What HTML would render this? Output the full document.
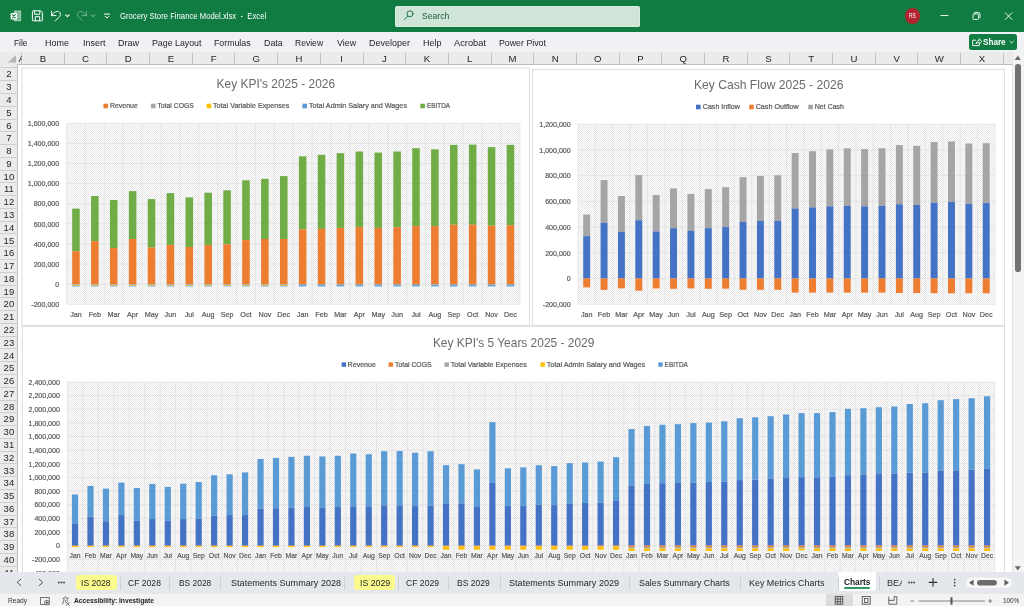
<!DOCTYPE html>
<html lang="en"><head><meta charset="utf-8"><title>Grocery Store Finance Model.xlsx - Excel</title>
<style>
html,body{margin:0;padding:0;}
body{width:1024px;height:606px;overflow:hidden;position:relative;background:#fff;font-family:"Liberation Sans",sans-serif;}
#app{position:absolute;left:0;top:0;width:1024px;height:606px;overflow:hidden;background:#fff;}
#ui{position:absolute;left:0;top:0;width:1024px;height:606px;will-change:transform;}
.t{position:absolute;white-space:pre;transform-origin:0 50%;line-height:1.16;}
#titlebar{position:absolute;left:0;top:0;width:1024px;height:32px;background:#107c41;}
#search{position:absolute;left:395px;top:5.5px;width:244.8px;height:21px;background:#cfe5d8;border-radius:2.5px;box-shadow:inset 0 0 0 0.6px #e3f0e8;}
#avatar{position:absolute;left:904.5px;top:8.1px;width:15.8px;height:15.8px;border-radius:50%;background:#b0232f;}
#menubar{position:absolute;left:0;top:32px;width:1024px;height:20.2px;background:#eff1f4;}
#share{position:absolute;left:969px;top:34.2px;width:47.6px;height:15.7px;background:#107c41;border-radius:2.5px;}
#colhdr{position:absolute;left:0;top:52.2px;width:1011.5px;height:11.7px;background:#ebebeb;border-bottom:1px solid #bdbdbd;}
.cb{position:absolute;top:53px;width:1px;height:11px;background:#c4c4c4;}
#rowhdr{position:absolute;left:0;top:64.4px;width:17px;height:510px;background:#ebebeb;border-right:1px solid #bdbdbd;}
.rb{position:absolute;left:0;width:17px;height:1px;background:#cfcfcf;}
#vscroll{position:absolute;left:1011.5px;top:52.2px;width:12.5px;height:520px;background:#f3f3f3;border-left:1px solid #e4e4e4;box-sizing:border-box;}
#vthumb{position:absolute;left:1015.3px;top:63.8px;width:5.6px;height:207.9px;border-radius:2.8px;background:#727272;}
#tabbar{position:absolute;left:0;top:572.3px;width:1024px;height:21.5px;background:#e4e7ec;}
.ytab{position:absolute;top:575.2px;height:15.3px;border-radius:3px;background:#fcfb8e;}
#acttab{position:absolute;left:838.3px;top:572px;width:38.1px;height:18.9px;background:#fff;border-radius:0 0 4px 4px;}
#actline{position:absolute;left:843.5px;top:587.2px;width:26.3px;height:1.5px;background:#2f9460;border-radius:1px;}
.ts{position:absolute;top:576.5px;width:1px;height:13px;background:#cdcfd3;}
#statusbar{position:absolute;left:0;top:593.8px;width:1024px;height:12.2px;background:#f3f3f3;}
#viewsel{position:absolute;left:826px;top:593.8px;width:26.9px;height:12.2px;background:#dcdcdc;}
svg{position:absolute;left:0;top:0;will-change:transform;}
svg text{font-family:"Liberation Sans",sans-serif;}
</style></head>
<body><div id="app">
<svg id="charts" width="1024" height="572" viewBox="0 0 1024 572">
<defs>
<pattern id="hatch" width="2" height="2" patternUnits="userSpaceOnUse">
<rect width="2" height="2" fill="#fdfdfd"/><path d="M-1 -1L3 3M-1 1L1 3M1 -1L3 1" stroke="#dcdcdc" stroke-width="0.62" fill="none"/>
</pattern>
</defs>
<rect x="22" y="68.1" width="507.4" height="257.3" fill="#fff" stroke="#dddddd" stroke-width="1"/>
<rect x="532.5" y="69.4" width="471.9" height="256" fill="#fff" stroke="#dddddd" stroke-width="1"/>
<rect x="22.3" y="326.3" width="982.2" height="313.7" fill="#fff" stroke="#dddddd" stroke-width="1"/>
<rect x="66.5" y="123.3" width="453.4" height="180.9" fill="url(#hatch)"/>
<path d="M66.5 123.3V304.2M85.39 123.3V304.2M104.28 123.3V304.2M123.17 123.3V304.2M142.07 123.3V304.2M160.96 123.3V304.2M179.85 123.3V304.2M198.74 123.3V304.2M217.63 123.3V304.2M236.53 123.3V304.2M255.42 123.3V304.2M274.31 123.3V304.2M293.2 123.3V304.2M312.09 123.3V304.2M330.98 123.3V304.2M349.88 123.3V304.2M368.77 123.3V304.2M387.66 123.3V304.2M406.55 123.3V304.2M425.44 123.3V304.2M444.33 123.3V304.2M463.22 123.3V304.2M482.12 123.3V304.2M501.01 123.3V304.2M519.9 123.3V304.2" stroke="#dfdfdf" stroke-width="0.7" fill="none"/>
<path d="M66.5 123.3H519.9M66.5 143.4H519.9M66.5 163.5H519.9M66.5 183.6H519.9M66.5 203.7H519.9M66.5 223.8H519.9M66.5 243.9H519.9M66.5 264H519.9M66.5 284.1H519.9M66.5 304.2H519.9" stroke="#dfdfdf" stroke-width="0.75" fill="none"/>
<rect x="72.17" y="208.65" width="7.56" height="42.55" fill="#70AD47"/>
<rect x="72.17" y="251.2" width="7.56" height="32.9" fill="#ED7D31"/>
<rect x="72.17" y="284.1" width="7.56" height="0.8" fill="#A5A5A5"/>
<rect x="72.17" y="284.9" width="7.56" height="0.8" fill="#FFC000"/>
<rect x="72.17" y="285.7" width="7.56" height="0.7" fill="#5B9BD5"/>
<text x="75.95" y="317.3" font-size="8" fill="#595959" text-anchor="middle" textLength="11.61" lengthAdjust="spacingAndGlyphs" stroke="#595959" stroke-width="0.22">Jan</text>
<rect x="91.06" y="196.1" width="7.56" height="45.1" fill="#70AD47"/>
<rect x="91.06" y="241.2" width="7.56" height="42.9" fill="#ED7D31"/>
<rect x="91.06" y="284.1" width="7.56" height="0.8" fill="#A5A5A5"/>
<rect x="91.06" y="284.9" width="7.56" height="0.8" fill="#FFC000"/>
<rect x="91.06" y="285.7" width="7.56" height="0.7" fill="#5B9BD5"/>
<text x="94.84" y="317.3" font-size="8" fill="#595959" text-anchor="middle" textLength="12.41" lengthAdjust="spacingAndGlyphs" stroke="#595959" stroke-width="0.22">Feb</text>
<rect x="109.95" y="200" width="7.56" height="48.1" fill="#70AD47"/>
<rect x="109.95" y="248.1" width="7.56" height="36" fill="#ED7D31"/>
<rect x="109.95" y="284.1" width="7.56" height="0.8" fill="#A5A5A5"/>
<rect x="109.95" y="284.9" width="7.56" height="0.8" fill="#FFC000"/>
<rect x="109.95" y="285.7" width="7.56" height="0.7" fill="#5B9BD5"/>
<text x="113.73" y="317.3" font-size="8" fill="#595959" text-anchor="middle" textLength="12.4" lengthAdjust="spacingAndGlyphs" stroke="#595959" stroke-width="0.22">Mar</text>
<rect x="128.84" y="191.1" width="7.56" height="47.9" fill="#70AD47"/>
<rect x="128.84" y="239" width="7.56" height="45.1" fill="#ED7D31"/>
<rect x="128.84" y="284.1" width="7.56" height="0.8" fill="#A5A5A5"/>
<rect x="128.84" y="284.9" width="7.56" height="0.8" fill="#FFC000"/>
<rect x="128.84" y="285.7" width="7.56" height="0.7" fill="#5B9BD5"/>
<text x="132.62" y="317.3" font-size="8" fill="#595959" text-anchor="middle" textLength="11.2" lengthAdjust="spacingAndGlyphs" stroke="#595959" stroke-width="0.22">Apr</text>
<rect x="147.73" y="199.1" width="7.56" height="48.5" fill="#70AD47"/>
<rect x="147.73" y="247.6" width="7.56" height="36.5" fill="#ED7D31"/>
<rect x="147.73" y="284.1" width="7.56" height="0.8" fill="#A5A5A5"/>
<rect x="147.73" y="284.9" width="7.56" height="0.8" fill="#FFC000"/>
<rect x="147.73" y="285.7" width="7.56" height="0.7" fill="#5B9BD5"/>
<text x="151.51" y="317.3" font-size="8" fill="#595959" text-anchor="middle" textLength="13.6" lengthAdjust="spacingAndGlyphs" stroke="#595959" stroke-width="0.22">May</text>
<rect x="166.63" y="193.1" width="7.56" height="51.8" fill="#70AD47"/>
<rect x="166.63" y="244.9" width="7.56" height="39.2" fill="#ED7D31"/>
<rect x="166.63" y="284.1" width="7.56" height="0.8" fill="#A5A5A5"/>
<rect x="166.63" y="284.9" width="7.56" height="0.8" fill="#FFC000"/>
<rect x="166.63" y="285.7" width="7.56" height="0.7" fill="#5B9BD5"/>
<text x="170.4" y="317.3" font-size="8" fill="#595959" text-anchor="middle" textLength="11.61" lengthAdjust="spacingAndGlyphs" stroke="#595959" stroke-width="0.22">Jun</text>
<rect x="185.52" y="197.4" width="7.56" height="49.6" fill="#70AD47"/>
<rect x="185.52" y="247" width="7.56" height="37.1" fill="#ED7D31"/>
<rect x="185.52" y="284.1" width="7.56" height="0.8" fill="#A5A5A5"/>
<rect x="185.52" y="284.9" width="7.56" height="0.8" fill="#FFC000"/>
<rect x="185.52" y="285.7" width="7.56" height="0.7" fill="#5B9BD5"/>
<text x="189.3" y="317.3" font-size="8" fill="#595959" text-anchor="middle" textLength="9.2" lengthAdjust="spacingAndGlyphs" stroke="#595959" stroke-width="0.22">Jul</text>
<rect x="204.41" y="192.7" width="7.56" height="52.2" fill="#70AD47"/>
<rect x="204.41" y="244.9" width="7.56" height="39.2" fill="#ED7D31"/>
<rect x="204.41" y="284.1" width="7.56" height="0.8" fill="#A5A5A5"/>
<rect x="204.41" y="284.9" width="7.56" height="0.8" fill="#FFC000"/>
<rect x="204.41" y="285.7" width="7.56" height="0.7" fill="#5B9BD5"/>
<text x="208.19" y="317.3" font-size="8" fill="#595959" text-anchor="middle" textLength="12.81" lengthAdjust="spacingAndGlyphs" stroke="#595959" stroke-width="0.22">Aug</text>
<rect x="223.3" y="190.3" width="7.56" height="54" fill="#70AD47"/>
<rect x="223.3" y="244.3" width="7.56" height="39.8" fill="#ED7D31"/>
<rect x="223.3" y="284.1" width="7.56" height="0.8" fill="#A5A5A5"/>
<rect x="223.3" y="284.9" width="7.56" height="0.8" fill="#FFC000"/>
<rect x="223.3" y="285.7" width="7.56" height="0.7" fill="#5B9BD5"/>
<text x="227.08" y="317.3" font-size="8" fill="#595959" text-anchor="middle" textLength="12.81" lengthAdjust="spacingAndGlyphs" stroke="#595959" stroke-width="0.22">Sep</text>
<rect x="242.19" y="180.3" width="7.56" height="59.8" fill="#70AD47"/>
<rect x="242.19" y="240.1" width="7.56" height="44" fill="#ED7D31"/>
<rect x="242.19" y="284.1" width="7.56" height="0.8" fill="#A5A5A5"/>
<rect x="242.19" y="284.9" width="7.56" height="0.8" fill="#FFC000"/>
<rect x="242.19" y="285.7" width="7.56" height="0.7" fill="#5B9BD5"/>
<text x="245.97" y="317.3" font-size="8" fill="#595959" text-anchor="middle" textLength="11.2" lengthAdjust="spacingAndGlyphs" stroke="#595959" stroke-width="0.22">Oct</text>
<rect x="261.08" y="178.9" width="7.56" height="60.1" fill="#70AD47"/>
<rect x="261.08" y="239" width="7.56" height="45.1" fill="#ED7D31"/>
<rect x="261.08" y="284.1" width="7.56" height="0.8" fill="#A5A5A5"/>
<rect x="261.08" y="284.9" width="7.56" height="0.8" fill="#FFC000"/>
<rect x="261.08" y="285.7" width="7.56" height="0.7" fill="#5B9BD5"/>
<text x="264.86" y="317.3" font-size="8" fill="#595959" text-anchor="middle" textLength="12.8" lengthAdjust="spacingAndGlyphs" stroke="#595959" stroke-width="0.22">Nov</text>
<rect x="279.98" y="176.1" width="7.56" height="62.9" fill="#70AD47"/>
<rect x="279.98" y="239" width="7.56" height="45.1" fill="#ED7D31"/>
<rect x="279.98" y="284.1" width="7.56" height="0.8" fill="#A5A5A5"/>
<rect x="279.98" y="284.9" width="7.56" height="0.8" fill="#FFC000"/>
<rect x="279.98" y="285.7" width="7.56" height="0.7" fill="#5B9BD5"/>
<text x="283.75" y="317.3" font-size="8" fill="#595959" text-anchor="middle" textLength="12.8" lengthAdjust="spacingAndGlyphs" stroke="#595959" stroke-width="0.22">Dec</text>
<rect x="298.87" y="156.3" width="7.56" height="73.1" fill="#70AD47"/>
<rect x="298.87" y="229.4" width="7.56" height="54.7" fill="#ED7D31"/>
<rect x="298.87" y="284.1" width="7.56" height="1" fill="#A5A5A5"/>
<rect x="298.87" y="285.1" width="7.56" height="1.3" fill="#5B9BD5"/>
<text x="302.65" y="317.3" font-size="8" fill="#595959" text-anchor="middle" textLength="11.61" lengthAdjust="spacingAndGlyphs" stroke="#595959" stroke-width="0.22">Jan</text>
<rect x="317.76" y="154.8" width="7.56" height="74.1" fill="#70AD47"/>
<rect x="317.76" y="228.9" width="7.56" height="55.2" fill="#ED7D31"/>
<rect x="317.76" y="284.1" width="7.56" height="1" fill="#A5A5A5"/>
<rect x="317.76" y="285.1" width="7.56" height="1.3" fill="#5B9BD5"/>
<text x="321.54" y="317.3" font-size="8" fill="#595959" text-anchor="middle" textLength="12.41" lengthAdjust="spacingAndGlyphs" stroke="#595959" stroke-width="0.22">Feb</text>
<rect x="336.65" y="153.2" width="7.56" height="74.7" fill="#70AD47"/>
<rect x="336.65" y="227.9" width="7.56" height="56.2" fill="#ED7D31"/>
<rect x="336.65" y="284.1" width="7.56" height="1" fill="#A5A5A5"/>
<rect x="336.65" y="285.1" width="7.56" height="1.3" fill="#5B9BD5"/>
<text x="340.43" y="317.3" font-size="8" fill="#595959" text-anchor="middle" textLength="12.4" lengthAdjust="spacingAndGlyphs" stroke="#595959" stroke-width="0.22">Mar</text>
<rect x="355.54" y="151.5" width="7.56" height="75.6" fill="#70AD47"/>
<rect x="355.54" y="227.1" width="7.56" height="57" fill="#ED7D31"/>
<rect x="355.54" y="284.1" width="7.56" height="1" fill="#A5A5A5"/>
<rect x="355.54" y="285.1" width="7.56" height="1.3" fill="#5B9BD5"/>
<text x="359.32" y="317.3" font-size="8" fill="#595959" text-anchor="middle" textLength="11.2" lengthAdjust="spacingAndGlyphs" stroke="#595959" stroke-width="0.22">Apr</text>
<rect x="374.43" y="152.6" width="7.56" height="75.3" fill="#70AD47"/>
<rect x="374.43" y="227.9" width="7.56" height="56.2" fill="#ED7D31"/>
<rect x="374.43" y="284.1" width="7.56" height="1" fill="#A5A5A5"/>
<rect x="374.43" y="285.1" width="7.56" height="1.3" fill="#5B9BD5"/>
<text x="378.21" y="317.3" font-size="8" fill="#595959" text-anchor="middle" textLength="13.6" lengthAdjust="spacingAndGlyphs" stroke="#595959" stroke-width="0.22">May</text>
<rect x="393.33" y="151.5" width="7.56" height="75.7" fill="#70AD47"/>
<rect x="393.33" y="227.2" width="7.56" height="56.9" fill="#ED7D31"/>
<rect x="393.33" y="284.1" width="7.56" height="1" fill="#A5A5A5"/>
<rect x="393.33" y="285.1" width="7.56" height="1.3" fill="#5B9BD5"/>
<text x="397.1" y="317.3" font-size="8" fill="#595959" text-anchor="middle" textLength="11.61" lengthAdjust="spacingAndGlyphs" stroke="#595959" stroke-width="0.22">Jun</text>
<rect x="412.22" y="148.2" width="7.56" height="77.9" fill="#70AD47"/>
<rect x="412.22" y="226.1" width="7.56" height="58" fill="#ED7D31"/>
<rect x="412.22" y="284.1" width="7.56" height="1" fill="#A5A5A5"/>
<rect x="412.22" y="285.1" width="7.56" height="1.3" fill="#5B9BD5"/>
<text x="416" y="317.3" font-size="8" fill="#595959" text-anchor="middle" textLength="9.2" lengthAdjust="spacingAndGlyphs" stroke="#595959" stroke-width="0.22">Jul</text>
<rect x="431.11" y="149.3" width="7.56" height="76.8" fill="#70AD47"/>
<rect x="431.11" y="226.1" width="7.56" height="58" fill="#ED7D31"/>
<rect x="431.11" y="284.1" width="7.56" height="1" fill="#A5A5A5"/>
<rect x="431.11" y="285.1" width="7.56" height="1.3" fill="#5B9BD5"/>
<text x="434.89" y="317.3" font-size="8" fill="#595959" text-anchor="middle" textLength="12.81" lengthAdjust="spacingAndGlyphs" stroke="#595959" stroke-width="0.22">Aug</text>
<rect x="450" y="144.9" width="7.56" height="79.8" fill="#70AD47"/>
<rect x="450" y="224.7" width="7.56" height="59.4" fill="#ED7D31"/>
<rect x="450" y="284.1" width="7.56" height="1" fill="#A5A5A5"/>
<rect x="450" y="285.1" width="7.56" height="1.3" fill="#5B9BD5"/>
<text x="453.78" y="317.3" font-size="8" fill="#595959" text-anchor="middle" textLength="12.81" lengthAdjust="spacingAndGlyphs" stroke="#595959" stroke-width="0.22">Sep</text>
<rect x="468.89" y="144.6" width="7.56" height="80.1" fill="#70AD47"/>
<rect x="468.89" y="224.7" width="7.56" height="59.4" fill="#ED7D31"/>
<rect x="468.89" y="284.1" width="7.56" height="1" fill="#A5A5A5"/>
<rect x="468.89" y="285.1" width="7.56" height="1.3" fill="#5B9BD5"/>
<text x="472.67" y="317.3" font-size="8" fill="#595959" text-anchor="middle" textLength="11.2" lengthAdjust="spacingAndGlyphs" stroke="#595959" stroke-width="0.22">Oct</text>
<rect x="487.78" y="147.1" width="7.56" height="78.6" fill="#70AD47"/>
<rect x="487.78" y="225.7" width="7.56" height="58.4" fill="#ED7D31"/>
<rect x="487.78" y="284.1" width="7.56" height="1" fill="#A5A5A5"/>
<rect x="487.78" y="285.1" width="7.56" height="1.3" fill="#5B9BD5"/>
<text x="491.56" y="317.3" font-size="8" fill="#595959" text-anchor="middle" textLength="12.8" lengthAdjust="spacingAndGlyphs" stroke="#595959" stroke-width="0.22">Nov</text>
<rect x="506.68" y="144.9" width="7.56" height="80.3" fill="#70AD47"/>
<rect x="506.68" y="225.2" width="7.56" height="58.9" fill="#ED7D31"/>
<rect x="506.68" y="284.1" width="7.56" height="1" fill="#A5A5A5"/>
<rect x="506.68" y="285.1" width="7.56" height="1.3" fill="#5B9BD5"/>
<text x="510.45" y="317.3" font-size="8" fill="#595959" text-anchor="middle" textLength="12.8" lengthAdjust="spacingAndGlyphs" stroke="#595959" stroke-width="0.22">Dec</text>
<text x="59.2" y="126.05" font-size="8" fill="#595959" text-anchor="end" textLength="31.39" lengthAdjust="spacingAndGlyphs" stroke="#595959" stroke-width="0.22">1,600,000</text>
<text x="59.2" y="146.15" font-size="8" fill="#595959" text-anchor="end" textLength="31.39" lengthAdjust="spacingAndGlyphs" stroke="#595959" stroke-width="0.22">1,400,000</text>
<text x="59.2" y="166.25" font-size="8" fill="#595959" text-anchor="end" textLength="31.39" lengthAdjust="spacingAndGlyphs" stroke="#595959" stroke-width="0.22">1,200,000</text>
<text x="59.2" y="186.35" font-size="8" fill="#595959" text-anchor="end" textLength="31.39" lengthAdjust="spacingAndGlyphs" stroke="#595959" stroke-width="0.22">1,000,000</text>
<text x="59.2" y="206.45" font-size="8" fill="#595959" text-anchor="end" textLength="25.5" lengthAdjust="spacingAndGlyphs" stroke="#595959" stroke-width="0.22">800,000</text>
<text x="59.2" y="226.55" font-size="8" fill="#595959" text-anchor="end" textLength="25.5" lengthAdjust="spacingAndGlyphs" stroke="#595959" stroke-width="0.22">600,000</text>
<text x="59.2" y="246.65" font-size="8" fill="#595959" text-anchor="end" textLength="25.5" lengthAdjust="spacingAndGlyphs" stroke="#595959" stroke-width="0.22">400,000</text>
<text x="59.2" y="266.75" font-size="8" fill="#595959" text-anchor="end" textLength="25.5" lengthAdjust="spacingAndGlyphs" stroke="#595959" stroke-width="0.22">200,000</text>
<text x="59.2" y="286.85" font-size="8" fill="#595959" text-anchor="end" textLength="3.92" lengthAdjust="spacingAndGlyphs" stroke="#595959" stroke-width="0.22">0</text>
<text x="59.2" y="306.95" font-size="8" fill="#595959" text-anchor="end" textLength="27.85" lengthAdjust="spacingAndGlyphs" stroke="#595959" stroke-width="0.22">-200,000</text>
<text x="216.6" y="87.6" font-size="12.6" fill="#6a6a6a" text-anchor="start" textLength="118.5" lengthAdjust="spacingAndGlyphs">Key KPI's 2025 - 2026</text>
<rect x="103.4" y="103.7" width="4.6" height="4.6" fill="#ED7D31"/>
<text x="109.9" y="108.4" font-size="7.4" fill="#595959" text-anchor="start" textLength="28" lengthAdjust="spacingAndGlyphs" stroke="#595959" stroke-width="0.22">Revenue</text>
<rect x="151" y="103.7" width="4.6" height="4.6" fill="#A5A5A5"/>
<text x="157.4" y="108.4" font-size="7.4" fill="#595959" text-anchor="start" textLength="36.5" lengthAdjust="spacingAndGlyphs" stroke="#595959" stroke-width="0.22">Total COGS</text>
<rect x="206.6" y="103.7" width="4.6" height="4.6" fill="#FFC000"/>
<text x="213" y="108.4" font-size="7.4" fill="#595959" text-anchor="start" textLength="76.4" lengthAdjust="spacingAndGlyphs" stroke="#595959" stroke-width="0.22">Total Variable Expenses</text>
<rect x="302.4" y="103.7" width="4.6" height="4.6" fill="#5B9BD5"/>
<text x="309" y="108.4" font-size="7.4" fill="#595959" text-anchor="start" textLength="98" lengthAdjust="spacingAndGlyphs" stroke="#595959" stroke-width="0.22">Total Admin Salary and Wages</text>
<rect x="420.3" y="103.7" width="4.6" height="4.6" fill="#70AD47"/>
<text x="427" y="108.4" font-size="7.4" fill="#595959" text-anchor="start" textLength="23.1" lengthAdjust="spacingAndGlyphs" stroke="#595959" stroke-width="0.22">EBITDA</text>
<rect x="578" y="124.2" width="416.9" height="180" fill="url(#hatch)"/>
<path d="M578 124.2V304.2M595.37 124.2V304.2M612.74 124.2V304.2M630.11 124.2V304.2M647.48 124.2V304.2M664.85 124.2V304.2M682.23 124.2V304.2M699.6 124.2V304.2M716.97 124.2V304.2M734.34 124.2V304.2M751.71 124.2V304.2M769.08 124.2V304.2M786.45 124.2V304.2M803.82 124.2V304.2M821.19 124.2V304.2M838.56 124.2V304.2M855.93 124.2V304.2M873.3 124.2V304.2M890.67 124.2V304.2M908.05 124.2V304.2M925.42 124.2V304.2M942.79 124.2V304.2M960.16 124.2V304.2M977.53 124.2V304.2M994.9 124.2V304.2" stroke="#dfdfdf" stroke-width="0.7" fill="none"/>
<path d="M578 124.2H994.9M578 149.91H994.9M578 175.63H994.9M578 201.34H994.9M578 227.06H994.9M578 252.77H994.9M578 278.49H994.9M578 304.2H994.9" stroke="#dfdfdf" stroke-width="0.75" fill="none"/>
<rect x="583.21" y="214.5" width="6.95" height="21.7" fill="#A5A5A5"/>
<rect x="583.21" y="236.2" width="6.95" height="42.29" fill="#4472C4"/>
<rect x="583.21" y="278.49" width="6.95" height="8.91" fill="#ED7D31"/>
<text x="586.69" y="317.3" font-size="8" fill="#595959" text-anchor="middle" textLength="11.61" lengthAdjust="spacingAndGlyphs" stroke="#595959" stroke-width="0.22">Jan</text>
<rect x="600.58" y="180.1" width="6.95" height="42.7" fill="#A5A5A5"/>
<rect x="600.58" y="222.8" width="6.95" height="55.69" fill="#4472C4"/>
<rect x="600.58" y="278.49" width="6.95" height="11.41" fill="#ED7D31"/>
<text x="604.06" y="317.3" font-size="8" fill="#595959" text-anchor="middle" textLength="12.41" lengthAdjust="spacingAndGlyphs" stroke="#595959" stroke-width="0.22">Feb</text>
<rect x="617.95" y="196" width="6.95" height="35.9" fill="#A5A5A5"/>
<rect x="617.95" y="231.9" width="6.95" height="46.59" fill="#4472C4"/>
<rect x="617.95" y="278.49" width="6.95" height="9.91" fill="#ED7D31"/>
<text x="621.43" y="317.3" font-size="8" fill="#595959" text-anchor="middle" textLength="12.4" lengthAdjust="spacingAndGlyphs" stroke="#595959" stroke-width="0.22">Mar</text>
<rect x="635.32" y="175.1" width="6.95" height="45.1" fill="#A5A5A5"/>
<rect x="635.32" y="220.2" width="6.95" height="58.29" fill="#4472C4"/>
<rect x="635.32" y="278.49" width="6.95" height="12.21" fill="#ED7D31"/>
<text x="638.8" y="317.3" font-size="8" fill="#595959" text-anchor="middle" textLength="11.2" lengthAdjust="spacingAndGlyphs" stroke="#595959" stroke-width="0.22">Apr</text>
<rect x="652.69" y="195" width="6.95" height="36.5" fill="#A5A5A5"/>
<rect x="652.69" y="231.5" width="6.95" height="46.99" fill="#4472C4"/>
<rect x="652.69" y="278.49" width="6.95" height="9.91" fill="#ED7D31"/>
<text x="656.17" y="317.3" font-size="8" fill="#595959" text-anchor="middle" textLength="13.6" lengthAdjust="spacingAndGlyphs" stroke="#595959" stroke-width="0.22">May</text>
<rect x="670.07" y="188.4" width="6.95" height="39.8" fill="#A5A5A5"/>
<rect x="670.07" y="228.2" width="6.95" height="50.29" fill="#4472C4"/>
<rect x="670.07" y="278.49" width="6.95" height="10.31" fill="#ED7D31"/>
<text x="673.54" y="317.3" font-size="8" fill="#595959" text-anchor="middle" textLength="11.61" lengthAdjust="spacingAndGlyphs" stroke="#595959" stroke-width="0.22">Jun</text>
<rect x="687.44" y="193.9" width="6.95" height="36.9" fill="#A5A5A5"/>
<rect x="687.44" y="230.8" width="6.95" height="47.69" fill="#4472C4"/>
<rect x="687.44" y="278.49" width="6.95" height="9.91" fill="#ED7D31"/>
<text x="690.91" y="317.3" font-size="8" fill="#595959" text-anchor="middle" textLength="9.2" lengthAdjust="spacingAndGlyphs" stroke="#595959" stroke-width="0.22">Jul</text>
<rect x="704.81" y="189.1" width="6.95" height="39.1" fill="#A5A5A5"/>
<rect x="704.81" y="228.2" width="6.95" height="50.29" fill="#4472C4"/>
<rect x="704.81" y="278.49" width="6.95" height="10.31" fill="#ED7D31"/>
<text x="708.28" y="317.3" font-size="8" fill="#595959" text-anchor="middle" textLength="12.81" lengthAdjust="spacingAndGlyphs" stroke="#595959" stroke-width="0.22">Aug</text>
<rect x="722.18" y="187.2" width="6.95" height="39.9" fill="#A5A5A5"/>
<rect x="722.18" y="227.1" width="6.95" height="51.39" fill="#4472C4"/>
<rect x="722.18" y="278.49" width="6.95" height="10.21" fill="#ED7D31"/>
<text x="725.65" y="317.3" font-size="8" fill="#595959" text-anchor="middle" textLength="12.81" lengthAdjust="spacingAndGlyphs" stroke="#595959" stroke-width="0.22">Sep</text>
<rect x="739.55" y="177.2" width="6.95" height="44.8" fill="#A5A5A5"/>
<rect x="739.55" y="222" width="6.95" height="56.49" fill="#4472C4"/>
<rect x="739.55" y="278.49" width="6.95" height="11.31" fill="#ED7D31"/>
<text x="743.02" y="317.3" font-size="8" fill="#595959" text-anchor="middle" textLength="11.2" lengthAdjust="spacingAndGlyphs" stroke="#595959" stroke-width="0.22">Oct</text>
<rect x="756.92" y="175.9" width="6.95" height="44.9" fill="#A5A5A5"/>
<rect x="756.92" y="220.8" width="6.95" height="57.69" fill="#4472C4"/>
<rect x="756.92" y="278.49" width="6.95" height="11.31" fill="#ED7D31"/>
<text x="760.39" y="317.3" font-size="8" fill="#595959" text-anchor="middle" textLength="12.8" lengthAdjust="spacingAndGlyphs" stroke="#595959" stroke-width="0.22">Nov</text>
<rect x="774.29" y="175.3" width="6.95" height="45.5" fill="#A5A5A5"/>
<rect x="774.29" y="220.8" width="6.95" height="57.69" fill="#4472C4"/>
<rect x="774.29" y="278.49" width="6.95" height="11.31" fill="#ED7D31"/>
<text x="777.76" y="317.3" font-size="8" fill="#595959" text-anchor="middle" textLength="12.8" lengthAdjust="spacingAndGlyphs" stroke="#595959" stroke-width="0.22">Dec</text>
<rect x="791.66" y="153" width="6.95" height="55.5" fill="#A5A5A5"/>
<rect x="791.66" y="208.5" width="6.95" height="69.99" fill="#4472C4"/>
<rect x="791.66" y="278.49" width="6.95" height="14.11" fill="#ED7D31"/>
<text x="795.14" y="317.3" font-size="8" fill="#595959" text-anchor="middle" textLength="11.61" lengthAdjust="spacingAndGlyphs" stroke="#595959" stroke-width="0.22">Jan</text>
<rect x="809.03" y="151.2" width="6.95" height="56.2" fill="#A5A5A5"/>
<rect x="809.03" y="207.4" width="6.95" height="71.09" fill="#4472C4"/>
<rect x="809.03" y="278.49" width="6.95" height="14.11" fill="#ED7D31"/>
<text x="812.51" y="317.3" font-size="8" fill="#595959" text-anchor="middle" textLength="12.41" lengthAdjust="spacingAndGlyphs" stroke="#595959" stroke-width="0.22">Feb</text>
<rect x="826.4" y="149.4" width="6.95" height="56.9" fill="#A5A5A5"/>
<rect x="826.4" y="206.3" width="6.95" height="72.19" fill="#4472C4"/>
<rect x="826.4" y="278.49" width="6.95" height="14.11" fill="#ED7D31"/>
<text x="829.88" y="317.3" font-size="8" fill="#595959" text-anchor="middle" textLength="12.4" lengthAdjust="spacingAndGlyphs" stroke="#595959" stroke-width="0.22">Mar</text>
<rect x="843.77" y="148.3" width="6.95" height="57.6" fill="#A5A5A5"/>
<rect x="843.77" y="205.9" width="6.95" height="72.59" fill="#4472C4"/>
<rect x="843.77" y="278.49" width="6.95" height="14.11" fill="#ED7D31"/>
<text x="847.25" y="317.3" font-size="8" fill="#595959" text-anchor="middle" textLength="11.2" lengthAdjust="spacingAndGlyphs" stroke="#595959" stroke-width="0.22">Apr</text>
<rect x="861.14" y="149.1" width="6.95" height="57.2" fill="#A5A5A5"/>
<rect x="861.14" y="206.3" width="6.95" height="72.19" fill="#4472C4"/>
<rect x="861.14" y="278.49" width="6.95" height="14.11" fill="#ED7D31"/>
<text x="864.62" y="317.3" font-size="8" fill="#595959" text-anchor="middle" textLength="13.6" lengthAdjust="spacingAndGlyphs" stroke="#595959" stroke-width="0.22">May</text>
<rect x="878.52" y="148.2" width="6.95" height="57.7" fill="#A5A5A5"/>
<rect x="878.52" y="205.9" width="6.95" height="72.59" fill="#4472C4"/>
<rect x="878.52" y="278.49" width="6.95" height="14.11" fill="#ED7D31"/>
<text x="881.99" y="317.3" font-size="8" fill="#595959" text-anchor="middle" textLength="11.61" lengthAdjust="spacingAndGlyphs" stroke="#595959" stroke-width="0.22">Jun</text>
<rect x="895.89" y="145.1" width="6.95" height="59.2" fill="#A5A5A5"/>
<rect x="895.89" y="204.3" width="6.95" height="74.19" fill="#4472C4"/>
<rect x="895.89" y="278.49" width="6.95" height="14.51" fill="#ED7D31"/>
<text x="899.36" y="317.3" font-size="8" fill="#595959" text-anchor="middle" textLength="9.2" lengthAdjust="spacingAndGlyphs" stroke="#595959" stroke-width="0.22">Jul</text>
<rect x="913.26" y="145.9" width="6.95" height="59.1" fill="#A5A5A5"/>
<rect x="913.26" y="205" width="6.95" height="73.49" fill="#4472C4"/>
<rect x="913.26" y="278.49" width="6.95" height="14.51" fill="#ED7D31"/>
<text x="916.73" y="317.3" font-size="8" fill="#595959" text-anchor="middle" textLength="12.81" lengthAdjust="spacingAndGlyphs" stroke="#595959" stroke-width="0.22">Aug</text>
<rect x="930.63" y="142.1" width="6.95" height="60.7" fill="#A5A5A5"/>
<rect x="930.63" y="202.8" width="6.95" height="75.69" fill="#4472C4"/>
<rect x="930.63" y="278.49" width="6.95" height="14.71" fill="#ED7D31"/>
<text x="934.1" y="317.3" font-size="8" fill="#595959" text-anchor="middle" textLength="12.81" lengthAdjust="spacingAndGlyphs" stroke="#595959" stroke-width="0.22">Sep</text>
<rect x="948" y="141.5" width="6.95" height="60.5" fill="#A5A5A5"/>
<rect x="948" y="202" width="6.95" height="76.49" fill="#4472C4"/>
<rect x="948" y="278.49" width="6.95" height="14.81" fill="#ED7D31"/>
<text x="951.47" y="317.3" font-size="8" fill="#595959" text-anchor="middle" textLength="11.2" lengthAdjust="spacingAndGlyphs" stroke="#595959" stroke-width="0.22">Oct</text>
<rect x="965.37" y="143.5" width="6.95" height="60.4" fill="#A5A5A5"/>
<rect x="965.37" y="203.9" width="6.95" height="74.59" fill="#4472C4"/>
<rect x="965.37" y="278.49" width="6.95" height="14.71" fill="#ED7D31"/>
<text x="968.84" y="317.3" font-size="8" fill="#595959" text-anchor="middle" textLength="12.8" lengthAdjust="spacingAndGlyphs" stroke="#595959" stroke-width="0.22">Nov</text>
<rect x="982.74" y="143.2" width="6.95" height="59.9" fill="#A5A5A5"/>
<rect x="982.74" y="203.1" width="6.95" height="75.39" fill="#4472C4"/>
<rect x="982.74" y="278.49" width="6.95" height="14.81" fill="#ED7D31"/>
<text x="986.21" y="317.3" font-size="8" fill="#595959" text-anchor="middle" textLength="12.8" lengthAdjust="spacingAndGlyphs" stroke="#595959" stroke-width="0.22">Dec</text>
<text x="570.7" y="126.95" font-size="8" fill="#595959" text-anchor="end" textLength="31.39" lengthAdjust="spacingAndGlyphs" stroke="#595959" stroke-width="0.22">1,200,000</text>
<text x="570.7" y="152.66" font-size="8" fill="#595959" text-anchor="end" textLength="31.39" lengthAdjust="spacingAndGlyphs" stroke="#595959" stroke-width="0.22">1,000,000</text>
<text x="570.7" y="178.38" font-size="8" fill="#595959" text-anchor="end" textLength="25.5" lengthAdjust="spacingAndGlyphs" stroke="#595959" stroke-width="0.22">800,000</text>
<text x="570.7" y="204.09" font-size="8" fill="#595959" text-anchor="end" textLength="25.5" lengthAdjust="spacingAndGlyphs" stroke="#595959" stroke-width="0.22">600,000</text>
<text x="570.7" y="229.81" font-size="8" fill="#595959" text-anchor="end" textLength="25.5" lengthAdjust="spacingAndGlyphs" stroke="#595959" stroke-width="0.22">400,000</text>
<text x="570.7" y="255.52" font-size="8" fill="#595959" text-anchor="end" textLength="25.5" lengthAdjust="spacingAndGlyphs" stroke="#595959" stroke-width="0.22">200,000</text>
<text x="570.7" y="281.24" font-size="8" fill="#595959" text-anchor="end" textLength="3.92" lengthAdjust="spacingAndGlyphs" stroke="#595959" stroke-width="0.22">0</text>
<text x="570.7" y="306.95" font-size="8" fill="#595959" text-anchor="end" textLength="27.85" lengthAdjust="spacingAndGlyphs" stroke="#595959" stroke-width="0.22">-200,000</text>
<text x="693.9" y="88.9" font-size="12.6" fill="#6a6a6a" text-anchor="start" textLength="149.6" lengthAdjust="spacingAndGlyphs">Key Cash Flow 2025 - 2026</text>
<rect x="696" y="104.7" width="4.6" height="4.6" fill="#4472C4"/>
<text x="702.8" y="109.4" font-size="7.4" fill="#595959" text-anchor="start" textLength="37.1" lengthAdjust="spacingAndGlyphs" stroke="#595959" stroke-width="0.22">Cash Inflow</text>
<rect x="749.2" y="104.7" width="4.6" height="4.6" fill="#ED7D31"/>
<text x="755.7" y="109.4" font-size="7.4" fill="#595959" text-anchor="start" textLength="43.1" lengthAdjust="spacingAndGlyphs" stroke="#595959" stroke-width="0.22">Cash Outflow</text>
<rect x="808.3" y="104.7" width="4.6" height="4.6" fill="#A5A5A5"/>
<text x="814.8" y="109.4" font-size="7.4" fill="#595959" text-anchor="start" textLength="29.2" lengthAdjust="spacingAndGlyphs" stroke="#595959" stroke-width="0.22">Net Cash</text>
<rect x="67.3" y="382" width="927.5" height="218" fill="url(#hatch)"/>
<path d="M67.3 382V600M82.76 382V600M98.22 382V600M113.67 382V600M129.13 382V600M144.59 382V600M160.05 382V600M175.51 382V600M190.97 382V600M206.43 382V600M221.88 382V600M237.34 382V600M252.8 382V600M268.26 382V600M283.72 382V600M299.18 382V600M314.63 382V600M330.09 382V600M345.55 382V600M361.01 382V600M376.47 382V600M391.93 382V600M407.38 382V600M422.84 382V600M438.3 382V600M453.76 382V600M469.22 382V600M484.68 382V600M500.13 382V600M515.59 382V600M531.05 382V600M546.51 382V600M561.97 382V600M577.42 382V600M592.88 382V600M608.34 382V600M623.8 382V600M639.26 382V600M654.72 382V600M670.17 382V600M685.63 382V600M701.09 382V600M716.55 382V600M732.01 382V600M747.47 382V600M762.92 382V600M778.38 382V600M793.84 382V600M809.3 382V600M824.76 382V600M840.22 382V600M855.67 382V600M871.13 382V600M886.59 382V600M902.05 382V600M917.51 382V600M932.97 382V600M948.42 382V600M963.88 382V600M979.34 382V600M994.8 382V600" stroke="#dfdfdf" stroke-width="0.7" fill="none"/>
<path d="M67.3 382H994.8M67.3 395.63H994.8M67.3 409.27H994.8M67.3 422.9H994.8M67.3 436.53H994.8M67.3 450.17H994.8M67.3 463.8H994.8M67.3 477.43H994.8M67.3 491.07H994.8M67.3 504.7H994.8M67.3 518.33H994.8M67.3 531.97H994.8M67.3 545.6H994.8M67.3 559.23H994.8M67.3 572.87H994.8" stroke="#dfdfdf" stroke-width="0.75" fill="none"/>
<rect x="71.94" y="494.48" width="6.18" height="28.87" fill="#5B9BD5"/>
<rect x="71.94" y="523.35" width="6.18" height="22.25" fill="#4472C4"/>
<rect x="71.94" y="545.6" width="6.18" height="0.5" fill="#ED7D31"/>
<rect x="71.94" y="546.1" width="6.18" height="1" fill="#FFC000"/>
<text x="75.03" y="558.3" font-size="7.9" fill="#595959" text-anchor="middle" textLength="10.95" lengthAdjust="spacingAndGlyphs" stroke="#595959" stroke-width="0.22">Jan</text>
<rect x="87.4" y="485.96" width="6.18" height="30.6" fill="#5B9BD5"/>
<rect x="87.4" y="516.56" width="6.18" height="29.04" fill="#4472C4"/>
<rect x="87.4" y="545.6" width="6.18" height="0.5" fill="#ED7D31"/>
<rect x="87.4" y="546.1" width="6.18" height="1" fill="#FFC000"/>
<text x="90.49" y="558.3" font-size="7.9" fill="#595959" text-anchor="middle" textLength="11.71" lengthAdjust="spacingAndGlyphs" stroke="#595959" stroke-width="0.22">Feb</text>
<rect x="102.85" y="488.61" width="6.18" height="32.63" fill="#5B9BD5"/>
<rect x="102.85" y="521.24" width="6.18" height="24.36" fill="#4472C4"/>
<rect x="102.85" y="545.6" width="6.18" height="0.5" fill="#ED7D31"/>
<rect x="102.85" y="546.1" width="6.18" height="1" fill="#FFC000"/>
<text x="105.95" y="558.3" font-size="7.9" fill="#595959" text-anchor="middle" textLength="11.7" lengthAdjust="spacingAndGlyphs" stroke="#595959" stroke-width="0.22">Mar</text>
<rect x="118.31" y="482.57" width="6.18" height="32.5" fill="#5B9BD5"/>
<rect x="118.31" y="515.07" width="6.18" height="30.53" fill="#4472C4"/>
<rect x="118.31" y="545.6" width="6.18" height="0.5" fill="#ED7D31"/>
<rect x="118.31" y="546.1" width="6.18" height="1" fill="#FFC000"/>
<text x="121.4" y="558.3" font-size="7.9" fill="#595959" text-anchor="middle" textLength="10.57" lengthAdjust="spacingAndGlyphs" stroke="#595959" stroke-width="0.22">Apr</text>
<rect x="133.77" y="488" width="6.18" height="32.9" fill="#5B9BD5"/>
<rect x="133.77" y="520.9" width="6.18" height="24.7" fill="#4472C4"/>
<rect x="133.77" y="545.6" width="6.18" height="0.5" fill="#ED7D31"/>
<rect x="133.77" y="546.1" width="6.18" height="1" fill="#FFC000"/>
<text x="136.86" y="558.3" font-size="7.9" fill="#595959" text-anchor="middle" textLength="12.83" lengthAdjust="spacingAndGlyphs" stroke="#595959" stroke-width="0.22">May</text>
<rect x="149.23" y="483.93" width="6.18" height="35.14" fill="#5B9BD5"/>
<rect x="149.23" y="519.07" width="6.18" height="26.53" fill="#4472C4"/>
<rect x="149.23" y="545.6" width="6.18" height="0.5" fill="#ED7D31"/>
<rect x="149.23" y="546.1" width="6.18" height="1" fill="#FFC000"/>
<text x="152.32" y="558.3" font-size="7.9" fill="#595959" text-anchor="middle" textLength="10.95" lengthAdjust="spacingAndGlyphs" stroke="#595959" stroke-width="0.22">Jun</text>
<rect x="164.69" y="486.85" width="6.18" height="33.65" fill="#5B9BD5"/>
<rect x="164.69" y="520.5" width="6.18" height="25.1" fill="#4472C4"/>
<rect x="164.69" y="545.6" width="6.18" height="0.5" fill="#ED7D31"/>
<rect x="164.69" y="546.1" width="6.18" height="1" fill="#FFC000"/>
<text x="167.78" y="558.3" font-size="7.9" fill="#595959" text-anchor="middle" textLength="8.68" lengthAdjust="spacingAndGlyphs" stroke="#595959" stroke-width="0.22">Jul</text>
<rect x="180.15" y="483.66" width="6.18" height="35.41" fill="#5B9BD5"/>
<rect x="180.15" y="519.07" width="6.18" height="26.53" fill="#4472C4"/>
<rect x="180.15" y="545.6" width="6.18" height="0.5" fill="#ED7D31"/>
<rect x="180.15" y="546.1" width="6.18" height="1" fill="#FFC000"/>
<text x="183.24" y="558.3" font-size="7.9" fill="#595959" text-anchor="middle" textLength="12.09" lengthAdjust="spacingAndGlyphs" stroke="#595959" stroke-width="0.22">Aug</text>
<rect x="195.6" y="482.03" width="6.18" height="36.64" fill="#5B9BD5"/>
<rect x="195.6" y="518.67" width="6.18" height="26.93" fill="#4472C4"/>
<rect x="195.6" y="545.6" width="6.18" height="0.5" fill="#ED7D31"/>
<rect x="195.6" y="546.1" width="6.18" height="1" fill="#FFC000"/>
<text x="198.7" y="558.3" font-size="7.9" fill="#595959" text-anchor="middle" textLength="12.09" lengthAdjust="spacingAndGlyphs" stroke="#595959" stroke-width="0.22">Sep</text>
<rect x="211.06" y="475.25" width="6.18" height="40.57" fill="#5B9BD5"/>
<rect x="211.06" y="515.82" width="6.18" height="29.78" fill="#4472C4"/>
<rect x="211.06" y="545.6" width="6.18" height="0.5" fill="#ED7D31"/>
<rect x="211.06" y="546.1" width="6.18" height="1" fill="#FFC000"/>
<text x="214.15" y="558.3" font-size="7.9" fill="#595959" text-anchor="middle" textLength="10.57" lengthAdjust="spacingAndGlyphs" stroke="#595959" stroke-width="0.22">Oct</text>
<rect x="226.52" y="474.3" width="6.18" height="40.77" fill="#5B9BD5"/>
<rect x="226.52" y="515.07" width="6.18" height="30.53" fill="#4472C4"/>
<rect x="226.52" y="545.6" width="6.18" height="0.5" fill="#ED7D31"/>
<rect x="226.52" y="546.1" width="6.18" height="1" fill="#FFC000"/>
<text x="229.61" y="558.3" font-size="7.9" fill="#595959" text-anchor="middle" textLength="12.08" lengthAdjust="spacingAndGlyphs" stroke="#595959" stroke-width="0.22">Nov</text>
<rect x="241.98" y="472.4" width="6.18" height="42.67" fill="#5B9BD5"/>
<rect x="241.98" y="515.07" width="6.18" height="30.53" fill="#4472C4"/>
<rect x="241.98" y="545.6" width="6.18" height="0.5" fill="#ED7D31"/>
<rect x="241.98" y="546.1" width="6.18" height="1" fill="#FFC000"/>
<text x="245.07" y="558.3" font-size="7.9" fill="#595959" text-anchor="middle" textLength="12.08" lengthAdjust="spacingAndGlyphs" stroke="#595959" stroke-width="0.22">Dec</text>
<rect x="257.44" y="458.96" width="6.18" height="49.59" fill="#5B9BD5"/>
<rect x="257.44" y="508.56" width="6.18" height="37.04" fill="#4472C4"/>
<rect x="257.44" y="545.6" width="6.18" height="0.5" fill="#ED7D31"/>
<rect x="257.44" y="546.1" width="6.18" height="1" fill="#FFC000"/>
<text x="260.53" y="558.3" font-size="7.9" fill="#595959" text-anchor="middle" textLength="10.95" lengthAdjust="spacingAndGlyphs" stroke="#595959" stroke-width="0.22">Jan</text>
<rect x="272.9" y="457.94" width="6.18" height="50.27" fill="#5B9BD5"/>
<rect x="272.9" y="508.22" width="6.18" height="37.38" fill="#4472C4"/>
<rect x="272.9" y="545.6" width="6.18" height="0.5" fill="#ED7D31"/>
<rect x="272.9" y="546.1" width="6.18" height="1" fill="#FFC000"/>
<text x="275.99" y="558.3" font-size="7.9" fill="#595959" text-anchor="middle" textLength="11.71" lengthAdjust="spacingAndGlyphs" stroke="#595959" stroke-width="0.22">Feb</text>
<rect x="288.35" y="456.86" width="6.18" height="50.68" fill="#5B9BD5"/>
<rect x="288.35" y="507.54" width="6.18" height="38.06" fill="#4472C4"/>
<rect x="288.35" y="545.6" width="6.18" height="0.5" fill="#ED7D31"/>
<rect x="288.35" y="546.1" width="6.18" height="1" fill="#FFC000"/>
<text x="291.45" y="558.3" font-size="7.9" fill="#595959" text-anchor="middle" textLength="11.7" lengthAdjust="spacingAndGlyphs" stroke="#595959" stroke-width="0.22">Mar</text>
<rect x="303.81" y="455.71" width="6.18" height="51.29" fill="#5B9BD5"/>
<rect x="303.81" y="507" width="6.18" height="38.6" fill="#4472C4"/>
<rect x="303.81" y="545.6" width="6.18" height="0.5" fill="#ED7D31"/>
<rect x="303.81" y="546.1" width="6.18" height="1" fill="#FFC000"/>
<text x="306.9" y="558.3" font-size="7.9" fill="#595959" text-anchor="middle" textLength="10.57" lengthAdjust="spacingAndGlyphs" stroke="#595959" stroke-width="0.22">Apr</text>
<rect x="319.27" y="456.45" width="6.18" height="51.09" fill="#5B9BD5"/>
<rect x="319.27" y="507.54" width="6.18" height="38.06" fill="#4472C4"/>
<rect x="319.27" y="545.6" width="6.18" height="0.5" fill="#ED7D31"/>
<rect x="319.27" y="546.1" width="6.18" height="1" fill="#FFC000"/>
<text x="322.36" y="558.3" font-size="7.9" fill="#595959" text-anchor="middle" textLength="12.83" lengthAdjust="spacingAndGlyphs" stroke="#595959" stroke-width="0.22">May</text>
<rect x="334.73" y="455.71" width="6.18" height="51.36" fill="#5B9BD5"/>
<rect x="334.73" y="507.06" width="6.18" height="38.54" fill="#4472C4"/>
<rect x="334.73" y="545.6" width="6.18" height="0.5" fill="#ED7D31"/>
<rect x="334.73" y="546.1" width="6.18" height="1" fill="#FFC000"/>
<text x="337.82" y="558.3" font-size="7.9" fill="#595959" text-anchor="middle" textLength="10.95" lengthAdjust="spacingAndGlyphs" stroke="#595959" stroke-width="0.22">Jun</text>
<rect x="350.19" y="453.47" width="6.18" height="52.85" fill="#5B9BD5"/>
<rect x="350.19" y="506.32" width="6.18" height="39.28" fill="#4472C4"/>
<rect x="350.19" y="545.6" width="6.18" height="0.5" fill="#ED7D31"/>
<rect x="350.19" y="546.1" width="6.18" height="1" fill="#FFC000"/>
<text x="353.28" y="558.3" font-size="7.9" fill="#595959" text-anchor="middle" textLength="8.68" lengthAdjust="spacingAndGlyphs" stroke="#595959" stroke-width="0.22">Jul</text>
<rect x="365.65" y="454.21" width="6.18" height="52.1" fill="#5B9BD5"/>
<rect x="365.65" y="506.32" width="6.18" height="39.28" fill="#4472C4"/>
<rect x="365.65" y="545.6" width="6.18" height="0.5" fill="#ED7D31"/>
<rect x="365.65" y="546.1" width="6.18" height="1" fill="#FFC000"/>
<text x="368.74" y="558.3" font-size="7.9" fill="#595959" text-anchor="middle" textLength="12.09" lengthAdjust="spacingAndGlyphs" stroke="#595959" stroke-width="0.22">Aug</text>
<rect x="381.1" y="451.23" width="6.18" height="54.14" fill="#5B9BD5"/>
<rect x="381.1" y="505.37" width="6.18" height="40.23" fill="#4472C4"/>
<rect x="381.1" y="545.6" width="6.18" height="0.5" fill="#ED7D31"/>
<rect x="381.1" y="546.1" width="6.18" height="1" fill="#FFC000"/>
<text x="384.2" y="558.3" font-size="7.9" fill="#595959" text-anchor="middle" textLength="12.09" lengthAdjust="spacingAndGlyphs" stroke="#595959" stroke-width="0.22">Sep</text>
<rect x="396.56" y="451.02" width="6.18" height="54.34" fill="#5B9BD5"/>
<rect x="396.56" y="505.37" width="6.18" height="40.23" fill="#4472C4"/>
<rect x="396.56" y="545.6" width="6.18" height="0.5" fill="#ED7D31"/>
<rect x="396.56" y="546.1" width="6.18" height="1" fill="#FFC000"/>
<text x="399.65" y="558.3" font-size="7.9" fill="#595959" text-anchor="middle" textLength="10.57" lengthAdjust="spacingAndGlyphs" stroke="#595959" stroke-width="0.22">Oct</text>
<rect x="412.02" y="452.72" width="6.18" height="53.33" fill="#5B9BD5"/>
<rect x="412.02" y="506.05" width="6.18" height="39.55" fill="#4472C4"/>
<rect x="412.02" y="545.6" width="6.18" height="0.5" fill="#ED7D31"/>
<rect x="412.02" y="546.1" width="6.18" height="1" fill="#FFC000"/>
<text x="415.11" y="558.3" font-size="7.9" fill="#595959" text-anchor="middle" textLength="12.08" lengthAdjust="spacingAndGlyphs" stroke="#595959" stroke-width="0.22">Nov</text>
<rect x="427.48" y="451.23" width="6.18" height="54.48" fill="#5B9BD5"/>
<rect x="427.48" y="505.71" width="6.18" height="39.89" fill="#4472C4"/>
<rect x="427.48" y="545.6" width="6.18" height="0.5" fill="#ED7D31"/>
<rect x="427.48" y="546.1" width="6.18" height="1" fill="#FFC000"/>
<text x="430.57" y="558.3" font-size="7.9" fill="#595959" text-anchor="middle" textLength="12.08" lengthAdjust="spacingAndGlyphs" stroke="#595959" stroke-width="0.22">Dec</text>
<rect x="442.94" y="465.2" width="6.18" height="38.8" fill="#5B9BD5"/>
<rect x="442.94" y="504" width="6.18" height="41.6" fill="#4472C4"/>
<rect x="442.94" y="545.6" width="6.18" height="0.9" fill="#ED7D31"/>
<rect x="442.94" y="546.5" width="6.18" height="3.2" fill="#FFC000"/>
<text x="446.03" y="558.3" font-size="7.9" fill="#595959" text-anchor="middle" textLength="10.95" lengthAdjust="spacingAndGlyphs" stroke="#595959" stroke-width="0.22">Jan</text>
<rect x="458.4" y="464.2" width="6.18" height="39.3" fill="#5B9BD5"/>
<rect x="458.4" y="503.5" width="6.18" height="42.1" fill="#4472C4"/>
<rect x="458.4" y="545.6" width="6.18" height="0.9" fill="#ED7D31"/>
<rect x="458.4" y="546.5" width="6.18" height="3.2" fill="#FFC000"/>
<text x="461.49" y="558.3" font-size="7.9" fill="#595959" text-anchor="middle" textLength="11.71" lengthAdjust="spacingAndGlyphs" stroke="#595959" stroke-width="0.22">Feb</text>
<rect x="473.85" y="469.4" width="6.18" height="37.6" fill="#5B9BD5"/>
<rect x="473.85" y="507" width="6.18" height="38.6" fill="#4472C4"/>
<rect x="473.85" y="545.6" width="6.18" height="0.9" fill="#ED7D31"/>
<rect x="473.85" y="546.5" width="6.18" height="3.2" fill="#FFC000"/>
<text x="476.95" y="558.3" font-size="7.9" fill="#595959" text-anchor="middle" textLength="11.7" lengthAdjust="spacingAndGlyphs" stroke="#595959" stroke-width="0.22">Mar</text>
<rect x="489.31" y="422.1" width="6.18" height="60.7" fill="#5B9BD5"/>
<rect x="489.31" y="482.8" width="6.18" height="62.8" fill="#4472C4"/>
<rect x="489.31" y="545.6" width="6.18" height="0.9" fill="#ED7D31"/>
<rect x="489.31" y="546.5" width="6.18" height="3.2" fill="#FFC000"/>
<text x="492.4" y="558.3" font-size="7.9" fill="#595959" text-anchor="middle" textLength="10.57" lengthAdjust="spacingAndGlyphs" stroke="#595959" stroke-width="0.22">Apr</text>
<rect x="504.77" y="468.3" width="6.18" height="37.6" fill="#5B9BD5"/>
<rect x="504.77" y="505.9" width="6.18" height="39.7" fill="#4472C4"/>
<rect x="504.77" y="545.6" width="6.18" height="0.9" fill="#ED7D31"/>
<rect x="504.77" y="546.5" width="6.18" height="3.2" fill="#FFC000"/>
<text x="507.86" y="558.3" font-size="7.9" fill="#595959" text-anchor="middle" textLength="12.83" lengthAdjust="spacingAndGlyphs" stroke="#595959" stroke-width="0.22">May</text>
<rect x="520.23" y="467.4" width="6.18" height="38.5" fill="#5B9BD5"/>
<rect x="520.23" y="505.9" width="6.18" height="39.7" fill="#4472C4"/>
<rect x="520.23" y="545.6" width="6.18" height="0.9" fill="#ED7D31"/>
<rect x="520.23" y="546.5" width="6.18" height="3.2" fill="#FFC000"/>
<text x="523.32" y="558.3" font-size="7.9" fill="#595959" text-anchor="middle" textLength="10.95" lengthAdjust="spacingAndGlyphs" stroke="#595959" stroke-width="0.22">Jun</text>
<rect x="535.69" y="465.2" width="6.18" height="39.6" fill="#5B9BD5"/>
<rect x="535.69" y="504.8" width="6.18" height="40.8" fill="#4472C4"/>
<rect x="535.69" y="545.6" width="6.18" height="0.9" fill="#ED7D31"/>
<rect x="535.69" y="546.5" width="6.18" height="3.2" fill="#FFC000"/>
<text x="538.78" y="558.3" font-size="7.9" fill="#595959" text-anchor="middle" textLength="8.68" lengthAdjust="spacingAndGlyphs" stroke="#595959" stroke-width="0.22">Jul</text>
<rect x="551.15" y="466.1" width="6.18" height="39" fill="#5B9BD5"/>
<rect x="551.15" y="505.1" width="6.18" height="40.5" fill="#4472C4"/>
<rect x="551.15" y="545.6" width="6.18" height="0.9" fill="#ED7D31"/>
<rect x="551.15" y="546.5" width="6.18" height="3.2" fill="#FFC000"/>
<text x="554.24" y="558.3" font-size="7.9" fill="#595959" text-anchor="middle" textLength="12.09" lengthAdjust="spacingAndGlyphs" stroke="#595959" stroke-width="0.22">Aug</text>
<rect x="566.6" y="463.1" width="6.18" height="40.7" fill="#5B9BD5"/>
<rect x="566.6" y="503.8" width="6.18" height="41.8" fill="#4472C4"/>
<rect x="566.6" y="545.6" width="6.18" height="0.9" fill="#ED7D31"/>
<rect x="566.6" y="546.5" width="6.18" height="3.2" fill="#FFC000"/>
<text x="569.7" y="558.3" font-size="7.9" fill="#595959" text-anchor="middle" textLength="12.09" lengthAdjust="spacingAndGlyphs" stroke="#595959" stroke-width="0.22">Sep</text>
<rect x="582.06" y="462.5" width="6.18" height="40.5" fill="#5B9BD5"/>
<rect x="582.06" y="503" width="6.18" height="42.6" fill="#4472C4"/>
<rect x="582.06" y="545.6" width="6.18" height="0.9" fill="#ED7D31"/>
<rect x="582.06" y="546.5" width="6.18" height="3.2" fill="#FFC000"/>
<text x="585.15" y="558.3" font-size="7.9" fill="#595959" text-anchor="middle" textLength="10.57" lengthAdjust="spacingAndGlyphs" stroke="#595959" stroke-width="0.22">Oct</text>
<rect x="597.52" y="461.6" width="6.18" height="41.1" fill="#5B9BD5"/>
<rect x="597.52" y="502.7" width="6.18" height="42.9" fill="#4472C4"/>
<rect x="597.52" y="545.6" width="6.18" height="0.9" fill="#ED7D31"/>
<rect x="597.52" y="546.5" width="6.18" height="3.2" fill="#FFC000"/>
<text x="600.61" y="558.3" font-size="7.9" fill="#595959" text-anchor="middle" textLength="12.08" lengthAdjust="spacingAndGlyphs" stroke="#595959" stroke-width="0.22">Nov</text>
<rect x="612.98" y="457.2" width="6.18" height="43.2" fill="#5B9BD5"/>
<rect x="612.98" y="500.4" width="6.18" height="45.2" fill="#4472C4"/>
<rect x="612.98" y="545.6" width="6.18" height="0.9" fill="#ED7D31"/>
<rect x="612.98" y="546.5" width="6.18" height="3.2" fill="#FFC000"/>
<text x="616.07" y="558.3" font-size="7.9" fill="#595959" text-anchor="middle" textLength="12.08" lengthAdjust="spacingAndGlyphs" stroke="#595959" stroke-width="0.22">Dec</text>
<rect x="628.44" y="429" width="6.18" height="56.4" fill="#5B9BD5"/>
<rect x="628.44" y="485.4" width="6.18" height="60.2" fill="#4472C4"/>
<rect x="628.44" y="545.6" width="6.18" height="1.5" fill="#ED7D31"/>
<rect x="628.44" y="547.1" width="6.18" height="1.4" fill="#A5A5A5"/>
<rect x="628.44" y="548.5" width="6.18" height="2.5" fill="#FFC000"/>
<text x="631.53" y="558.3" font-size="7.9" fill="#595959" text-anchor="middle" textLength="10.95" lengthAdjust="spacingAndGlyphs" stroke="#595959" stroke-width="0.22">Jan</text>
<rect x="643.9" y="425.9" width="6.18" height="58.1" fill="#5B9BD5"/>
<rect x="643.9" y="484" width="6.18" height="61.6" fill="#4472C4"/>
<rect x="643.9" y="545.6" width="6.18" height="1.5" fill="#ED7D31"/>
<rect x="643.9" y="547.1" width="6.18" height="1.4" fill="#A5A5A5"/>
<rect x="643.9" y="548.5" width="6.18" height="2.5" fill="#FFC000"/>
<text x="646.99" y="558.3" font-size="7.9" fill="#595959" text-anchor="middle" textLength="11.71" lengthAdjust="spacingAndGlyphs" stroke="#595959" stroke-width="0.22">Feb</text>
<rect x="659.35" y="424.8" width="6.18" height="58.4" fill="#5B9BD5"/>
<rect x="659.35" y="483.2" width="6.18" height="62.4" fill="#4472C4"/>
<rect x="659.35" y="545.6" width="6.18" height="1.5" fill="#ED7D31"/>
<rect x="659.35" y="547.1" width="6.18" height="1.4" fill="#A5A5A5"/>
<rect x="659.35" y="548.5" width="6.18" height="2.5" fill="#FFC000"/>
<text x="662.45" y="558.3" font-size="7.9" fill="#595959" text-anchor="middle" textLength="11.7" lengthAdjust="spacingAndGlyphs" stroke="#595959" stroke-width="0.22">Mar</text>
<rect x="674.81" y="424.2" width="6.18" height="58.7" fill="#5B9BD5"/>
<rect x="674.81" y="482.9" width="6.18" height="62.7" fill="#4472C4"/>
<rect x="674.81" y="545.6" width="6.18" height="1.5" fill="#ED7D31"/>
<rect x="674.81" y="547.1" width="6.18" height="1.4" fill="#A5A5A5"/>
<rect x="674.81" y="548.5" width="6.18" height="2.5" fill="#FFC000"/>
<text x="677.9" y="558.3" font-size="7.9" fill="#595959" text-anchor="middle" textLength="10.57" lengthAdjust="spacingAndGlyphs" stroke="#595959" stroke-width="0.22">Apr</text>
<rect x="690.27" y="423.1" width="6.18" height="59.7" fill="#5B9BD5"/>
<rect x="690.27" y="482.8" width="6.18" height="62.8" fill="#4472C4"/>
<rect x="690.27" y="545.6" width="6.18" height="1.5" fill="#ED7D31"/>
<rect x="690.27" y="547.1" width="6.18" height="1.4" fill="#A5A5A5"/>
<rect x="690.27" y="548.5" width="6.18" height="2.5" fill="#FFC000"/>
<text x="693.36" y="558.3" font-size="7.9" fill="#595959" text-anchor="middle" textLength="12.83" lengthAdjust="spacingAndGlyphs" stroke="#595959" stroke-width="0.22">May</text>
<rect x="705.73" y="422.6" width="6.18" height="59.4" fill="#5B9BD5"/>
<rect x="705.73" y="482" width="6.18" height="63.6" fill="#4472C4"/>
<rect x="705.73" y="545.6" width="6.18" height="1.5" fill="#ED7D31"/>
<rect x="705.73" y="547.1" width="6.18" height="1.4" fill="#A5A5A5"/>
<rect x="705.73" y="548.5" width="6.18" height="2.5" fill="#FFC000"/>
<text x="708.82" y="558.3" font-size="7.9" fill="#595959" text-anchor="middle" textLength="10.95" lengthAdjust="spacingAndGlyphs" stroke="#595959" stroke-width="0.22">Jun</text>
<rect x="721.19" y="421.3" width="6.18" height="60.4" fill="#5B9BD5"/>
<rect x="721.19" y="481.7" width="6.18" height="63.9" fill="#4472C4"/>
<rect x="721.19" y="545.6" width="6.18" height="1.5" fill="#ED7D31"/>
<rect x="721.19" y="547.1" width="6.18" height="1.4" fill="#A5A5A5"/>
<rect x="721.19" y="548.5" width="6.18" height="2.5" fill="#FFC000"/>
<text x="724.28" y="558.3" font-size="7.9" fill="#595959" text-anchor="middle" textLength="8.68" lengthAdjust="spacingAndGlyphs" stroke="#595959" stroke-width="0.22">Jul</text>
<rect x="736.65" y="418.2" width="6.18" height="61.9" fill="#5B9BD5"/>
<rect x="736.65" y="480.1" width="6.18" height="65.5" fill="#4472C4"/>
<rect x="736.65" y="545.6" width="6.18" height="1.5" fill="#ED7D31"/>
<rect x="736.65" y="547.1" width="6.18" height="1.4" fill="#A5A5A5"/>
<rect x="736.65" y="548.5" width="6.18" height="2.5" fill="#FFC000"/>
<text x="739.74" y="558.3" font-size="7.9" fill="#595959" text-anchor="middle" textLength="12.09" lengthAdjust="spacingAndGlyphs" stroke="#595959" stroke-width="0.22">Aug</text>
<rect x="752.1" y="417.3" width="6.18" height="62.3" fill="#5B9BD5"/>
<rect x="752.1" y="479.6" width="6.18" height="66" fill="#4472C4"/>
<rect x="752.1" y="545.6" width="6.18" height="1.5" fill="#ED7D31"/>
<rect x="752.1" y="547.1" width="6.18" height="1.4" fill="#A5A5A5"/>
<rect x="752.1" y="548.5" width="6.18" height="2.5" fill="#FFC000"/>
<text x="755.2" y="558.3" font-size="7.9" fill="#595959" text-anchor="middle" textLength="12.09" lengthAdjust="spacingAndGlyphs" stroke="#595959" stroke-width="0.22">Sep</text>
<rect x="767.56" y="416.2" width="6.18" height="62.7" fill="#5B9BD5"/>
<rect x="767.56" y="478.9" width="6.18" height="66.7" fill="#4472C4"/>
<rect x="767.56" y="545.6" width="6.18" height="1.5" fill="#ED7D31"/>
<rect x="767.56" y="547.1" width="6.18" height="1.4" fill="#A5A5A5"/>
<rect x="767.56" y="548.5" width="6.18" height="2.5" fill="#FFC000"/>
<text x="770.65" y="558.3" font-size="7.9" fill="#595959" text-anchor="middle" textLength="10.57" lengthAdjust="spacingAndGlyphs" stroke="#595959" stroke-width="0.22">Oct</text>
<rect x="783.02" y="414.5" width="6.18" height="63.5" fill="#5B9BD5"/>
<rect x="783.02" y="478" width="6.18" height="67.6" fill="#4472C4"/>
<rect x="783.02" y="545.6" width="6.18" height="1.5" fill="#ED7D31"/>
<rect x="783.02" y="547.1" width="6.18" height="1.4" fill="#A5A5A5"/>
<rect x="783.02" y="548.5" width="6.18" height="2.5" fill="#FFC000"/>
<text x="786.11" y="558.3" font-size="7.9" fill="#595959" text-anchor="middle" textLength="12.08" lengthAdjust="spacingAndGlyphs" stroke="#595959" stroke-width="0.22">Nov</text>
<rect x="798.48" y="413.1" width="6.18" height="64.1" fill="#5B9BD5"/>
<rect x="798.48" y="477.2" width="6.18" height="68.4" fill="#4472C4"/>
<rect x="798.48" y="545.6" width="6.18" height="1.5" fill="#ED7D31"/>
<rect x="798.48" y="547.1" width="6.18" height="1.4" fill="#A5A5A5"/>
<rect x="798.48" y="548.5" width="6.18" height="1.8" fill="#FFC000"/>
<text x="801.57" y="558.3" font-size="7.9" fill="#595959" text-anchor="middle" textLength="12.08" lengthAdjust="spacingAndGlyphs" stroke="#595959" stroke-width="0.22">Dec</text>
<rect x="813.94" y="413.1" width="6.18" height="64.3" fill="#5B9BD5"/>
<rect x="813.94" y="477.4" width="6.18" height="68.2" fill="#4472C4"/>
<rect x="813.94" y="545.6" width="6.18" height="1.5" fill="#ED7D31"/>
<rect x="813.94" y="547.1" width="6.18" height="1.4" fill="#A5A5A5"/>
<rect x="813.94" y="548.5" width="6.18" height="2.5" fill="#FFC000"/>
<text x="817.03" y="558.3" font-size="7.9" fill="#595959" text-anchor="middle" textLength="10.95" lengthAdjust="spacingAndGlyphs" stroke="#595959" stroke-width="0.22">Jan</text>
<rect x="829.4" y="412.1" width="6.18" height="64.7" fill="#5B9BD5"/>
<rect x="829.4" y="476.8" width="6.18" height="68.8" fill="#4472C4"/>
<rect x="829.4" y="545.6" width="6.18" height="1.5" fill="#ED7D31"/>
<rect x="829.4" y="547.1" width="6.18" height="1.4" fill="#A5A5A5"/>
<rect x="829.4" y="548.5" width="6.18" height="2.5" fill="#FFC000"/>
<text x="832.49" y="558.3" font-size="7.9" fill="#595959" text-anchor="middle" textLength="11.71" lengthAdjust="spacingAndGlyphs" stroke="#595959" stroke-width="0.22">Feb</text>
<rect x="844.85" y="408.8" width="6.18" height="66.4" fill="#5B9BD5"/>
<rect x="844.85" y="475.2" width="6.18" height="70.4" fill="#4472C4"/>
<rect x="844.85" y="545.6" width="6.18" height="1.5" fill="#ED7D31"/>
<rect x="844.85" y="547.1" width="6.18" height="1.4" fill="#A5A5A5"/>
<rect x="844.85" y="548.5" width="6.18" height="2.5" fill="#FFC000"/>
<text x="847.95" y="558.3" font-size="7.9" fill="#595959" text-anchor="middle" textLength="11.7" lengthAdjust="spacingAndGlyphs" stroke="#595959" stroke-width="0.22">Mar</text>
<rect x="860.31" y="408.2" width="6.18" height="66.7" fill="#5B9BD5"/>
<rect x="860.31" y="474.9" width="6.18" height="70.7" fill="#4472C4"/>
<rect x="860.31" y="545.6" width="6.18" height="1.5" fill="#ED7D31"/>
<rect x="860.31" y="547.1" width="6.18" height="1.4" fill="#A5A5A5"/>
<rect x="860.31" y="548.5" width="6.18" height="2.5" fill="#FFC000"/>
<text x="863.4" y="558.3" font-size="7.9" fill="#595959" text-anchor="middle" textLength="10.57" lengthAdjust="spacingAndGlyphs" stroke="#595959" stroke-width="0.22">Apr</text>
<rect x="875.77" y="407.2" width="6.18" height="66.9" fill="#5B9BD5"/>
<rect x="875.77" y="474.1" width="6.18" height="71.5" fill="#4472C4"/>
<rect x="875.77" y="545.6" width="6.18" height="1.5" fill="#ED7D31"/>
<rect x="875.77" y="547.1" width="6.18" height="1.4" fill="#A5A5A5"/>
<rect x="875.77" y="548.5" width="6.18" height="2.5" fill="#FFC000"/>
<text x="878.86" y="558.3" font-size="7.9" fill="#595959" text-anchor="middle" textLength="12.83" lengthAdjust="spacingAndGlyphs" stroke="#595959" stroke-width="0.22">May</text>
<rect x="891.23" y="406.5" width="6.18" height="67.4" fill="#5B9BD5"/>
<rect x="891.23" y="473.9" width="6.18" height="71.7" fill="#4472C4"/>
<rect x="891.23" y="545.6" width="6.18" height="1.5" fill="#ED7D31"/>
<rect x="891.23" y="547.1" width="6.18" height="1.4" fill="#A5A5A5"/>
<rect x="891.23" y="548.5" width="6.18" height="2.5" fill="#FFC000"/>
<text x="894.32" y="558.3" font-size="7.9" fill="#595959" text-anchor="middle" textLength="10.95" lengthAdjust="spacingAndGlyphs" stroke="#595959" stroke-width="0.22">Jun</text>
<rect x="906.69" y="404" width="6.18" height="68.8" fill="#5B9BD5"/>
<rect x="906.69" y="472.8" width="6.18" height="72.8" fill="#4472C4"/>
<rect x="906.69" y="545.6" width="6.18" height="1.5" fill="#ED7D31"/>
<rect x="906.69" y="547.1" width="6.18" height="1.4" fill="#A5A5A5"/>
<rect x="906.69" y="548.5" width="6.18" height="2.5" fill="#FFC000"/>
<text x="909.78" y="558.3" font-size="7.9" fill="#595959" text-anchor="middle" textLength="8.68" lengthAdjust="spacingAndGlyphs" stroke="#595959" stroke-width="0.22">Jul</text>
<rect x="922.15" y="403.2" width="6.18" height="69.3" fill="#5B9BD5"/>
<rect x="922.15" y="472.5" width="6.18" height="73.1" fill="#4472C4"/>
<rect x="922.15" y="545.6" width="6.18" height="1.5" fill="#ED7D31"/>
<rect x="922.15" y="547.1" width="6.18" height="1.4" fill="#A5A5A5"/>
<rect x="922.15" y="548.5" width="6.18" height="2.5" fill="#FFC000"/>
<text x="925.24" y="558.3" font-size="7.9" fill="#595959" text-anchor="middle" textLength="12.09" lengthAdjust="spacingAndGlyphs" stroke="#595959" stroke-width="0.22">Aug</text>
<rect x="937.6" y="400.2" width="6.18" height="70.7" fill="#5B9BD5"/>
<rect x="937.6" y="470.9" width="6.18" height="74.7" fill="#4472C4"/>
<rect x="937.6" y="545.6" width="6.18" height="1.5" fill="#ED7D31"/>
<rect x="937.6" y="547.1" width="6.18" height="1.4" fill="#A5A5A5"/>
<rect x="937.6" y="548.5" width="6.18" height="2.5" fill="#FFC000"/>
<text x="940.7" y="558.3" font-size="7.9" fill="#595959" text-anchor="middle" textLength="12.09" lengthAdjust="spacingAndGlyphs" stroke="#595959" stroke-width="0.22">Sep</text>
<rect x="953.06" y="399.1" width="6.18" height="71.2" fill="#5B9BD5"/>
<rect x="953.06" y="470.3" width="6.18" height="75.3" fill="#4472C4"/>
<rect x="953.06" y="545.6" width="6.18" height="1.5" fill="#ED7D31"/>
<rect x="953.06" y="547.1" width="6.18" height="1.4" fill="#A5A5A5"/>
<rect x="953.06" y="548.5" width="6.18" height="2.5" fill="#FFC000"/>
<text x="956.15" y="558.3" font-size="7.9" fill="#595959" text-anchor="middle" textLength="10.57" lengthAdjust="spacingAndGlyphs" stroke="#595959" stroke-width="0.22">Oct</text>
<rect x="968.52" y="398.2" width="6.18" height="71.6" fill="#5B9BD5"/>
<rect x="968.52" y="469.8" width="6.18" height="75.8" fill="#4472C4"/>
<rect x="968.52" y="545.6" width="6.18" height="1.5" fill="#ED7D31"/>
<rect x="968.52" y="547.1" width="6.18" height="1.4" fill="#A5A5A5"/>
<rect x="968.52" y="548.5" width="6.18" height="2.5" fill="#FFC000"/>
<text x="971.61" y="558.3" font-size="7.9" fill="#595959" text-anchor="middle" textLength="12.08" lengthAdjust="spacingAndGlyphs" stroke="#595959" stroke-width="0.22">Nov</text>
<rect x="983.98" y="396.3" width="6.18" height="72.6" fill="#5B9BD5"/>
<rect x="983.98" y="468.9" width="6.18" height="76.7" fill="#4472C4"/>
<rect x="983.98" y="545.6" width="6.18" height="1.5" fill="#ED7D31"/>
<rect x="983.98" y="547.1" width="6.18" height="1.4" fill="#A5A5A5"/>
<rect x="983.98" y="548.5" width="6.18" height="2.5" fill="#FFC000"/>
<text x="987.07" y="558.3" font-size="7.9" fill="#595959" text-anchor="middle" textLength="12.08" lengthAdjust="spacingAndGlyphs" stroke="#595959" stroke-width="0.22">Dec</text>
<text x="59.9" y="384.75" font-size="8" fill="#595959" text-anchor="end" textLength="31.39" lengthAdjust="spacingAndGlyphs" stroke="#595959" stroke-width="0.22">2,400,000</text>
<text x="59.9" y="398.38" font-size="8" fill="#595959" text-anchor="end" textLength="31.39" lengthAdjust="spacingAndGlyphs" stroke="#595959" stroke-width="0.22">2,200,000</text>
<text x="59.9" y="412.02" font-size="8" fill="#595959" text-anchor="end" textLength="31.39" lengthAdjust="spacingAndGlyphs" stroke="#595959" stroke-width="0.22">2,000,000</text>
<text x="59.9" y="425.65" font-size="8" fill="#595959" text-anchor="end" textLength="31.39" lengthAdjust="spacingAndGlyphs" stroke="#595959" stroke-width="0.22">1,800,000</text>
<text x="59.9" y="439.28" font-size="8" fill="#595959" text-anchor="end" textLength="31.39" lengthAdjust="spacingAndGlyphs" stroke="#595959" stroke-width="0.22">1,600,000</text>
<text x="59.9" y="452.92" font-size="8" fill="#595959" text-anchor="end" textLength="31.39" lengthAdjust="spacingAndGlyphs" stroke="#595959" stroke-width="0.22">1,400,000</text>
<text x="59.9" y="466.55" font-size="8" fill="#595959" text-anchor="end" textLength="31.39" lengthAdjust="spacingAndGlyphs" stroke="#595959" stroke-width="0.22">1,200,000</text>
<text x="59.9" y="480.18" font-size="8" fill="#595959" text-anchor="end" textLength="31.39" lengthAdjust="spacingAndGlyphs" stroke="#595959" stroke-width="0.22">1,000,000</text>
<text x="59.9" y="493.82" font-size="8" fill="#595959" text-anchor="end" textLength="25.5" lengthAdjust="spacingAndGlyphs" stroke="#595959" stroke-width="0.22">800,000</text>
<text x="59.9" y="507.45" font-size="8" fill="#595959" text-anchor="end" textLength="25.5" lengthAdjust="spacingAndGlyphs" stroke="#595959" stroke-width="0.22">600,000</text>
<text x="59.9" y="521.08" font-size="8" fill="#595959" text-anchor="end" textLength="25.5" lengthAdjust="spacingAndGlyphs" stroke="#595959" stroke-width="0.22">400,000</text>
<text x="59.9" y="534.72" font-size="8" fill="#595959" text-anchor="end" textLength="25.5" lengthAdjust="spacingAndGlyphs" stroke="#595959" stroke-width="0.22">200,000</text>
<text x="59.9" y="548.35" font-size="8" fill="#595959" text-anchor="end" textLength="3.92" lengthAdjust="spacingAndGlyphs" stroke="#595959" stroke-width="0.22">0</text>
<text x="59.9" y="561.98" font-size="8" fill="#595959" text-anchor="end" textLength="27.85" lengthAdjust="spacingAndGlyphs" stroke="#595959" stroke-width="0.22">-200,000</text>
<text x="59.9" y="575.62" font-size="8" fill="#595959" text-anchor="end" textLength="27.85" lengthAdjust="spacingAndGlyphs" stroke="#595959" stroke-width="0.22">-400,000</text>
<text x="432.9" y="346.6" font-size="12.6" fill="#6a6a6a" text-anchor="start" textLength="161.4" lengthAdjust="spacingAndGlyphs">Key KPI's 5 Years 2025 - 2029</text>
<rect x="341.6" y="362.4" width="4.4" height="4.4" fill="#4472C4"/>
<text x="347.6" y="366.8" font-size="7.4" fill="#595959" text-anchor="start" textLength="28.3" lengthAdjust="spacingAndGlyphs" stroke="#595959" stroke-width="0.22">Revenue</text>
<rect x="388.6" y="362.4" width="4.4" height="4.4" fill="#ED7D31"/>
<text x="395" y="366.8" font-size="7.4" fill="#595959" text-anchor="start" textLength="36.6" lengthAdjust="spacingAndGlyphs" stroke="#595959" stroke-width="0.22">Total COGS</text>
<rect x="444.5" y="362.4" width="4.4" height="4.4" fill="#A5A5A5"/>
<text x="450.7" y="366.8" font-size="7.4" fill="#595959" text-anchor="start" textLength="76.2" lengthAdjust="spacingAndGlyphs" stroke="#595959" stroke-width="0.22">Total Variable Expenses</text>
<rect x="540.5" y="362.4" width="4.4" height="4.4" fill="#FFC000"/>
<text x="546.8" y="366.8" font-size="7.4" fill="#595959" text-anchor="start" textLength="98.4" lengthAdjust="spacingAndGlyphs" stroke="#595959" stroke-width="0.22">Total Admin Salary and Wages</text>
<rect x="658.3" y="362.4" width="4.4" height="4.4" fill="#5B9BD5"/>
<text x="664.6" y="366.8" font-size="7.4" fill="#595959" text-anchor="start" textLength="23.3" lengthAdjust="spacingAndGlyphs" stroke="#595959" stroke-width="0.22">EBITDA</text>
</svg>
<div id="ui">
<div id="titlebar"></div>
<span class="t " style="left:119.8px;top:12.04px;font-size:8.2px;color:#ffffff;transform:scaleX(0.9422);">Grocery Store Finance Model.xlsx  -  Excel</span>
<div id="search"></div>
<span class="t " style="left:422.4px;top:10.8px;font-size:8.8px;color:#1e5c3a;transform:scaleX(0.9792);">Search</span>
<div id="avatar"></div>
<span class="t " style="left:908.9px;top:12.49px;font-size:6.4px;color:#ffffff;transform:scaleX(0.7761);">RS</span>
<div id="menubar"></div>
<span class="t " style="left:14px;top:37.86px;font-size:9.2px;color:#242424;transform:scaleX(0.9107);">File</span>
<span class="t " style="left:45px;top:37.86px;font-size:9.2px;color:#242424;transform:scaleX(0.9780);">Home</span>
<span class="t " style="left:82.5px;top:37.86px;font-size:9.2px;color:#242424;transform:scaleX(0.9780);">Insert</span>
<span class="t " style="left:117.7px;top:37.86px;font-size:9.2px;color:#242424;transform:scaleX(0.9829);">Draw</span>
<span class="t " style="left:151.5px;top:37.86px;font-size:9.2px;color:#242424;transform:scaleX(0.9582);">Page Layout</span>
<span class="t " style="left:214px;top:37.86px;font-size:9.2px;color:#242424;transform:scaleX(0.9547);">Formulas</span>
<span class="t " style="left:263.6px;top:37.86px;font-size:9.2px;color:#242424;transform:scaleX(0.9675);">Data</span>
<span class="t " style="left:295.4px;top:37.86px;font-size:9.2px;color:#242424;transform:scaleX(0.9316);">Review</span>
<span class="t " style="left:336.9px;top:37.86px;font-size:9.2px;color:#242424;transform:scaleX(0.9659);">View</span>
<span class="t " style="left:369px;top:37.86px;font-size:9.2px;color:#242424;transform:scaleX(0.9778);">Developer</span>
<span class="t " style="left:422.5px;top:37.86px;font-size:9.2px;color:#242424;transform:scaleX(0.9778);">Help</span>
<span class="t " style="left:454px;top:37.86px;font-size:9.2px;color:#242424;transform:scaleX(1.0093);">Acrobat</span>
<span class="t " style="left:499px;top:37.86px;font-size:9.2px;color:#242424;transform:scaleX(0.9575);">Power Pivot</span>
<div id="share"></div>
<span class="t " style="left:983.1px;top:37.1px;font-size:8.8px;color:#ffffff;transform:scaleX(0.9241);font-weight:700;">Share</span>
<div id="colhdr"></div>
<div class="cb" style="left:63.69px"></div>
<span class="t " style="left:39.64px;top:53.33px;font-size:9.6px;color:#1f1f1f;transform:scaleX(1.0000);">B</span>
<div class="cb" style="left:106.38px"></div>
<span class="t " style="left:82.07px;top:53.33px;font-size:9.6px;color:#1f1f1f;transform:scaleX(1.0000);">C</span>
<div class="cb" style="left:149.07px"></div>
<span class="t " style="left:124.76px;top:53.33px;font-size:9.6px;color:#1f1f1f;transform:scaleX(1.0000);">D</span>
<div class="cb" style="left:191.76px"></div>
<span class="t " style="left:167.71px;top:53.33px;font-size:9.6px;color:#1f1f1f;transform:scaleX(1.0000);">E</span>
<div class="cb" style="left:234.45px"></div>
<span class="t " style="left:210.67px;top:53.33px;font-size:9.6px;color:#1f1f1f;transform:scaleX(1.0000);">F</span>
<div class="cb" style="left:277.14px"></div>
<span class="t " style="left:252.56px;top:53.33px;font-size:9.6px;color:#1f1f1f;transform:scaleX(1.0000);">G</span>
<div class="cb" style="left:319.83px"></div>
<span class="t " style="left:295.52px;top:53.33px;font-size:9.6px;color:#1f1f1f;transform:scaleX(1.0000);">H</span>
<div class="cb" style="left:362.52px"></div>
<span class="t " style="left:340.34px;top:53.33px;font-size:9.6px;color:#1f1f1f;transform:scaleX(1.0000);">I</span>
<div class="cb" style="left:405.21px"></div>
<span class="t " style="left:381.97px;top:53.33px;font-size:9.6px;color:#1f1f1f;transform:scaleX(1.0000);">J</span>
<div class="cb" style="left:447.9px"></div>
<span class="t " style="left:423.85px;top:53.33px;font-size:9.6px;color:#1f1f1f;transform:scaleX(1.0000);">K</span>
<div class="cb" style="left:490.59px"></div>
<span class="t " style="left:467.08px;top:53.33px;font-size:9.6px;color:#1f1f1f;transform:scaleX(1.0000);">L</span>
<div class="cb" style="left:533.28px"></div>
<span class="t " style="left:508.44px;top:53.33px;font-size:9.6px;color:#1f1f1f;transform:scaleX(1.0000);">M</span>
<div class="cb" style="left:575.97px"></div>
<span class="t " style="left:551.66px;top:53.33px;font-size:9.6px;color:#1f1f1f;transform:scaleX(1.0000);">N</span>
<div class="cb" style="left:618.66px"></div>
<span class="t " style="left:594.08px;top:53.33px;font-size:9.6px;color:#1f1f1f;transform:scaleX(1.0000);">O</span>
<div class="cb" style="left:661.35px"></div>
<span class="t " style="left:637.3px;top:53.33px;font-size:9.6px;color:#1f1f1f;transform:scaleX(1.0000);">P</span>
<div class="cb" style="left:704.04px"></div>
<span class="t " style="left:679.46px;top:53.33px;font-size:9.6px;color:#1f1f1f;transform:scaleX(1.0000);">Q</span>
<div class="cb" style="left:746.73px"></div>
<span class="t " style="left:722.42px;top:53.33px;font-size:9.6px;color:#1f1f1f;transform:scaleX(1.0000);">R</span>
<div class="cb" style="left:789.42px"></div>
<span class="t " style="left:765.37px;top:53.33px;font-size:9.6px;color:#1f1f1f;transform:scaleX(1.0000);">S</span>
<div class="cb" style="left:832.11px"></div>
<span class="t " style="left:808.33px;top:53.33px;font-size:9.6px;color:#1f1f1f;transform:scaleX(1.0000);">T</span>
<div class="cb" style="left:874.8px"></div>
<span class="t " style="left:850.49px;top:53.33px;font-size:9.6px;color:#1f1f1f;transform:scaleX(1.0000);">U</span>
<div class="cb" style="left:917.49px"></div>
<span class="t " style="left:893.44px;top:53.33px;font-size:9.6px;color:#1f1f1f;transform:scaleX(1.0000);">V</span>
<div class="cb" style="left:960.18px"></div>
<span class="t " style="left:934.8px;top:53.33px;font-size:9.6px;color:#1f1f1f;transform:scaleX(1.0000);">W</span>
<div class="cb" style="left:1002.87px"></div>
<span class="t " style="left:978.82px;top:53.33px;font-size:9.6px;color:#1f1f1f;transform:scaleX(1.0000);">X</span>
<div class="cb" style="left:21px"></div>
<div style="position:absolute;left:17.5px;top:52px;width:4px;height:12px;overflow:hidden"><span class="t" style="left:1px;top:1px;font-size:9.6px;color:#262626;">A</span></div>
<div id="rowhdr"></div>
<div class="rb" style="top:67.4px"></div>
<div class="rb" style="top:80.18px"></div>
<span class="t " style="left:6.26px;top:68.48px;font-size:9.5px;color:#1f1f1f;transform:scaleX(1.0000);">2</span>
<div class="rb" style="top:92.95px"></div>
<span class="t " style="left:6.26px;top:81.25px;font-size:9.5px;color:#1f1f1f;transform:scaleX(1.0000);">3</span>
<div class="rb" style="top:105.73px"></div>
<span class="t " style="left:6.26px;top:94.03px;font-size:9.5px;color:#1f1f1f;transform:scaleX(1.0000);">4</span>
<div class="rb" style="top:118.5px"></div>
<span class="t " style="left:6.26px;top:106.8px;font-size:9.5px;color:#1f1f1f;transform:scaleX(1.0000);">5</span>
<div class="rb" style="top:131.28px"></div>
<span class="t " style="left:6.26px;top:119.58px;font-size:9.5px;color:#1f1f1f;transform:scaleX(1.0000);">6</span>
<div class="rb" style="top:144.05px"></div>
<span class="t " style="left:6.26px;top:132.35px;font-size:9.5px;color:#1f1f1f;transform:scaleX(1.0000);">7</span>
<div class="rb" style="top:156.83px"></div>
<span class="t " style="left:6.26px;top:145.13px;font-size:9.5px;color:#1f1f1f;transform:scaleX(1.0000);">8</span>
<div class="rb" style="top:169.6px"></div>
<span class="t " style="left:6.26px;top:157.9px;font-size:9.5px;color:#1f1f1f;transform:scaleX(1.0000);">9</span>
<div class="rb" style="top:182.38px"></div>
<span class="t " style="left:3.62px;top:170.68px;font-size:9.5px;color:#1f1f1f;transform:scaleX(1.0000);">10</span>
<div class="rb" style="top:195.15px"></div>
<span class="t " style="left:3.97px;top:183.45px;font-size:9.5px;color:#1f1f1f;transform:scaleX(1.0000);">11</span>
<div class="rb" style="top:207.93px"></div>
<span class="t " style="left:3.62px;top:196.23px;font-size:9.5px;color:#1f1f1f;transform:scaleX(1.0000);">12</span>
<div class="rb" style="top:220.7px"></div>
<span class="t " style="left:3.62px;top:209px;font-size:9.5px;color:#1f1f1f;transform:scaleX(1.0000);">13</span>
<div class="rb" style="top:233.48px"></div>
<span class="t " style="left:3.62px;top:221.78px;font-size:9.5px;color:#1f1f1f;transform:scaleX(1.0000);">14</span>
<div class="rb" style="top:246.25px"></div>
<span class="t " style="left:3.62px;top:234.55px;font-size:9.5px;color:#1f1f1f;transform:scaleX(1.0000);">15</span>
<div class="rb" style="top:259.02px"></div>
<span class="t " style="left:3.62px;top:247.33px;font-size:9.5px;color:#1f1f1f;transform:scaleX(1.0000);">16</span>
<div class="rb" style="top:271.8px"></div>
<span class="t " style="left:3.62px;top:260.1px;font-size:9.5px;color:#1f1f1f;transform:scaleX(1.0000);">17</span>
<div class="rb" style="top:284.57px"></div>
<span class="t " style="left:3.62px;top:272.88px;font-size:9.5px;color:#1f1f1f;transform:scaleX(1.0000);">18</span>
<div class="rb" style="top:297.35px"></div>
<span class="t " style="left:3.62px;top:285.65px;font-size:9.5px;color:#1f1f1f;transform:scaleX(1.0000);">19</span>
<div class="rb" style="top:310.12px"></div>
<span class="t " style="left:3.62px;top:298.43px;font-size:9.5px;color:#1f1f1f;transform:scaleX(1.0000);">20</span>
<div class="rb" style="top:322.9px"></div>
<span class="t " style="left:3.62px;top:311.2px;font-size:9.5px;color:#1f1f1f;transform:scaleX(1.0000);">21</span>
<div class="rb" style="top:335.67px"></div>
<span class="t " style="left:3.62px;top:323.98px;font-size:9.5px;color:#1f1f1f;transform:scaleX(1.0000);">22</span>
<div class="rb" style="top:348.45px"></div>
<span class="t " style="left:3.62px;top:336.75px;font-size:9.5px;color:#1f1f1f;transform:scaleX(1.0000);">23</span>
<div class="rb" style="top:361.23px"></div>
<span class="t " style="left:3.62px;top:349.53px;font-size:9.5px;color:#1f1f1f;transform:scaleX(1.0000);">24</span>
<div class="rb" style="top:374px"></div>
<span class="t " style="left:3.62px;top:362.3px;font-size:9.5px;color:#1f1f1f;transform:scaleX(1.0000);">25</span>
<div class="rb" style="top:386.77px"></div>
<span class="t " style="left:3.62px;top:375.08px;font-size:9.5px;color:#1f1f1f;transform:scaleX(1.0000);">26</span>
<div class="rb" style="top:399.55px"></div>
<span class="t " style="left:3.62px;top:387.85px;font-size:9.5px;color:#1f1f1f;transform:scaleX(1.0000);">27</span>
<div class="rb" style="top:412.33px"></div>
<span class="t " style="left:3.62px;top:400.63px;font-size:9.5px;color:#1f1f1f;transform:scaleX(1.0000);">28</span>
<div class="rb" style="top:425.1px"></div>
<span class="t " style="left:3.62px;top:413.4px;font-size:9.5px;color:#1f1f1f;transform:scaleX(1.0000);">29</span>
<div class="rb" style="top:437.88px"></div>
<span class="t " style="left:3.62px;top:426.18px;font-size:9.5px;color:#1f1f1f;transform:scaleX(1.0000);">30</span>
<div class="rb" style="top:450.65px"></div>
<span class="t " style="left:3.62px;top:438.95px;font-size:9.5px;color:#1f1f1f;transform:scaleX(1.0000);">31</span>
<div class="rb" style="top:463.42px"></div>
<span class="t " style="left:3.62px;top:451.73px;font-size:9.5px;color:#1f1f1f;transform:scaleX(1.0000);">32</span>
<div class="rb" style="top:476.2px"></div>
<span class="t " style="left:3.62px;top:464.5px;font-size:9.5px;color:#1f1f1f;transform:scaleX(1.0000);">33</span>
<div class="rb" style="top:488.98px"></div>
<span class="t " style="left:3.62px;top:477.28px;font-size:9.5px;color:#1f1f1f;transform:scaleX(1.0000);">34</span>
<div class="rb" style="top:501.75px"></div>
<span class="t " style="left:3.62px;top:490.05px;font-size:9.5px;color:#1f1f1f;transform:scaleX(1.0000);">35</span>
<div class="rb" style="top:514.52px"></div>
<span class="t " style="left:3.62px;top:502.83px;font-size:9.5px;color:#1f1f1f;transform:scaleX(1.0000);">36</span>
<div class="rb" style="top:527.3px"></div>
<span class="t " style="left:3.62px;top:515.6px;font-size:9.5px;color:#1f1f1f;transform:scaleX(1.0000);">37</span>
<div class="rb" style="top:540.08px"></div>
<span class="t " style="left:3.62px;top:528.38px;font-size:9.5px;color:#1f1f1f;transform:scaleX(1.0000);">38</span>
<div class="rb" style="top:552.85px"></div>
<span class="t " style="left:3.62px;top:541.15px;font-size:9.5px;color:#1f1f1f;transform:scaleX(1.0000);">39</span>
<div class="rb" style="top:565.62px"></div>
<span class="t " style="left:3.62px;top:553.93px;font-size:9.5px;color:#1f1f1f;transform:scaleX(1.0000);">40</span>
<div class="rb" style="top:578.4px"></div>
<span class="t " style="left:3.62px;top:566.7px;font-size:9.5px;color:#1f1f1f;transform:scaleX(1.0000);">41</span>
<div id="vscroll"></div><div id="vthumb"></div>
<div id="tabbar"></div>
<div class="ytab" style="left:75.7px;width:41.1px"></div>
<div class="ytab" style="left:354.1px;width:40.9px"></div>
<div id="acttab"></div><div id="actline"></div>
<span class="t " style="left:81.3px;top:577.26px;font-size:9.9px;color:#262626;transform:scaleX(0.8703);">IS 2028</span>
<span class="t " style="left:127.7px;top:577.26px;font-size:9.9px;color:#262626;transform:scaleX(0.8692);">CF 2028</span>
<span class="t " style="left:179px;top:577.26px;font-size:9.9px;color:#262626;transform:scaleX(0.8505);">BS 2028</span>
<span class="t " style="left:230.5px;top:577.26px;font-size:9.9px;color:#262626;transform:scaleX(0.9204);">Statements Summary 2028</span>
<span class="t " style="left:359.5px;top:577.26px;font-size:9.9px;color:#262626;transform:scaleX(0.8850);">IS 2029</span>
<span class="t " style="left:406.4px;top:577.26px;font-size:9.9px;color:#262626;transform:scaleX(0.8718);">CF 2029</span>
<span class="t " style="left:457.3px;top:577.26px;font-size:9.9px;color:#262626;transform:scaleX(0.8610);">BS 2029</span>
<span class="t " style="left:509.1px;top:577.26px;font-size:9.9px;color:#262626;transform:scaleX(0.9204);">Statements Summary 2029</span>
<span class="t " style="left:638.8px;top:577.26px;font-size:9.9px;color:#262626;transform:scaleX(0.8941);">Sales Summary Charts</span>
<span class="t " style="left:749.4px;top:577.26px;font-size:9.9px;color:#262626;transform:scaleX(0.9041);">Key Metrics Charts</span>
<span class="t " style="left:843.5px;top:575.62px;font-size:9.8px;color:#1a1a1a;transform:scaleX(0.8473);font-weight:700;">Charts</span>
<div style="position:absolute;left:884px;top:573px;width:17.6px;height:19px;overflow:hidden"><span class="t" style="left:3.3px;top:4.2px;font-size:9.8px;color:#333;transform:scaleX(0.93)">BEAM</span></div>
<div class="ts" style="left:119.5px"></div>
<div class="ts" style="left:169.4px"></div>
<div class="ts" style="left:220.3px"></div>
<div class="ts" style="left:343.5px"></div>
<div class="ts" style="left:398px"></div>
<div class="ts" style="left:447.9px"></div>
<div class="ts" style="left:499.7px"></div>
<div class="ts" style="left:629.2px"></div>
<div class="ts" style="left:739.6px"></div>
<div class="ts" style="left:837.6px"></div>
<div class="ts" style="left:879.2px"></div>
<div id="statusbar"></div>
<span class="t " style="left:7.6px;top:597.21px;font-size:7.4px;color:#333333;transform:scaleX(0.8930);">Ready</span>
<span class="t " style="left:73.6px;top:597.21px;font-size:7.4px;color:#262626;transform:scaleX(0.9048);font-weight:700;">Accessibility: Investigate</span>
<span class="t " style="left:1002.9px;top:597.21px;font-size:7.4px;color:#333333;transform:scaleX(0.8613);">100%</span>
<div id="viewsel"></div>
</div>
<svg id="icons" width="1024" height="606" viewBox="0 0 1024 606">
<g fill="none" stroke="#fff" stroke-width="1" stroke-linecap="round" stroke-linejoin="round">
<!-- excel logo -->
<path d="M14 10.5h6.2a1 1 0 0 1 1 1v8.8a1 1 0 0 1-1 1H14z" fill="#fff" fill-opacity="0.62" stroke="none"/>
<path d="M14 13.3h7.2M14 16h7.2M14 18.7h7.2M17.8 10.5v10.8" stroke="#107c41" stroke-opacity="0.6" stroke-width="0.7"/>
<rect x="10.6" y="12.9" width="6.6" height="6.6" rx="0.9" fill="#fff" stroke="none"/>
<path d="M12.5 14.5l2.8 3.4M15.3 14.5l-2.8 3.4" stroke="#107c41" stroke-width="1.15"/>
<!-- save -->
<path d="M32.4 11.4a.6.6 0 0 1 .6-.6h7.6l1.8 1.8v7.6a.6.6 0 0 1-.6.6h-8.8a.6.6 0 0 1-.6-.6z"/>
<path d="M34.6 10.9v3.4h5.2v-3.4M35.3 20.7v-4h4.4v4"/>
<!-- undo -->
<path d="M51.6 11.2v4.4h4.4M51.8 15.4c2.2-4.2 6.6-5.2 8.2-2.6c1.2 2-.2 3.6-1.6 5L55.2 21"/>
<path d="M65.6 14.9l1.8 1.7l1.8-1.7" stroke-width="1.1"/>
<!-- redo (disabled) -->
<g stroke-opacity="0.38">
<path d="M86.4 11.2v4.4h-4.4M86.2 15.4c-2.2-4.2-6.6-5.2-8.2-2.6c-1.2 2 .2 3.6 1.6 5L82.8 21"/>
<path d="M91.2 14.9l1.8 1.7l1.8-1.7" stroke-width="1.1"/>
</g>
<!-- customize QAT -->
<path d="M104.2 14.1h5.4M105.2 16.4l1.7 1.7l1.7-1.7"/>
<!-- window controls -->
<path d="M940.8 15.5h7.2" stroke-width="0.9"/>
<rect x="973" y="13.9" width="5.6" height="5.6" rx="1.2" stroke-width="0.9"/>
<path d="M974.6 12.4h3.4a2 2 0 0 1 2 2v3.4" stroke-width="0.9"/>
<path d="M1005.2 12.7l6.8 6.8M1012 12.7l-6.8 6.8" stroke-width="0.9"/>
<!-- share icon -->
<path d="M975.6 40.2h-2.9v5.4h6.6v-1.6M976.2 43.6c.2-2 1.2-3 3-3.1v-1.7l2.6 2.6l-2.6 2.6v-1.6c-1.3 0-2.2.4-3 1.2z" stroke-width="0.9"/>
<path d="M1010 41.4l1.7 1.6l1.7-1.6" stroke-width="0.9"/>
</g>
<!-- search icon -->
<g fill="none" stroke="#1e6b41" stroke-width="0.95" stroke-linecap="round">
<circle cx="410" cy="13.8" r="3"/><path d="M407.8 16.1l-3.4 3.4"/>
</g>
<!-- select all triangle -->
<path d="M16 54.9V62.6H7.9z" fill="#b4b4b4"/>
<!-- vertical scroll arrows -->
<path d="M1014.7 60l3.1-4.4l3.1 4.4z" fill="#6a6a6a"/>
<path d="M1014.7 566.2l3.1 4.4l3.1-4.4z" fill="#6a6a6a"/>
<!-- tab nav -->
<g fill="none" stroke="#555" stroke-width="1" stroke-linecap="round" stroke-linejoin="round">
<path d="M20.8 579.2l-3.6 3.2l3.6 3.2M39.2 579.2l3.6 3.2l-3.6 3.2"/>
<path d="M929.2 582.4h7.6M933 578.6v7.6" stroke="#2e2e2e" stroke-width="1.1"/>
</g>
<g fill="#444">
<circle cx="58.8" cy="582.5" r="0.95"/><circle cx="61.4" cy="582.5" r="0.95"/><circle cx="64" cy="582.5" r="0.95"/>
<circle cx="909" cy="582.5" r="0.95"/><circle cx="911.6" cy="582.5" r="0.95"/><circle cx="914.2" cy="582.5" r="0.95"/>
<circle cx="954.7" cy="579.6" r="0.9"/><circle cx="954.7" cy="582.6" r="0.9"/><circle cx="954.7" cy="585.6" r="0.9"/>
</g>
<!-- horizontal scroll pill -->
<rect x="966" y="577.4" width="45.8" height="10.6" rx="5.3" fill="#f7f7f7"/>
<path d="M973.6 579.6v6.2l-4.6-3.1zM1004.4 579.6v6.2l4.6-3.1z" fill="#5e5e5e"/>
<rect x="977" y="580" width="19.9" height="5.4" rx="2.7" fill="#6c6c6c"/>
<!-- status bar icons -->
<g fill="none" stroke="#555" stroke-width="0.8">
<rect x="40.6" y="597.6" width="8.6" height="7" />
<circle cx="46.8" cy="602.6" r="2.3" fill="#f3f3f3"/><circle cx="46.8" cy="602.6" r="0.8" fill="#444"/>
<path d="M65.6 596.6l1 1.6h1.8l-1.3 1.4l.5 1.8M65.6 596.6l-1 1.6h-1.8l1.3 1.4l-1.6 4.6M65.6 600.2v2.4M66 602l3.6 3.6M69.6 602L66 605.6"/>
<!-- view buttons -->
<g stroke="#444">
<rect x="835.2" y="596.6" width="7.6" height="7.6"/><path d="M837.7 596.6v7.6M840.3 596.6v7.6M835.2 599.1h7.6M835.2 601.7h7.6"/>
<rect x="862.2" y="596.6" width="8" height="7.6"/><rect x="864.4" y="598.4" width="3.6" height="4" />
<path d="M888.8 596.6v7.6h8v-7.6h-2.6v3.8h-5.4"/>
</g>
<path d="M910.6 601h3.6M918.6 601h66.4M988.2 601h4M990.2 599v4" stroke="#666"/>
</g>
<rect x="950.5" y="597.2" width="2" height="7.4" fill="#555"/>

</svg>
</div></body></html>
